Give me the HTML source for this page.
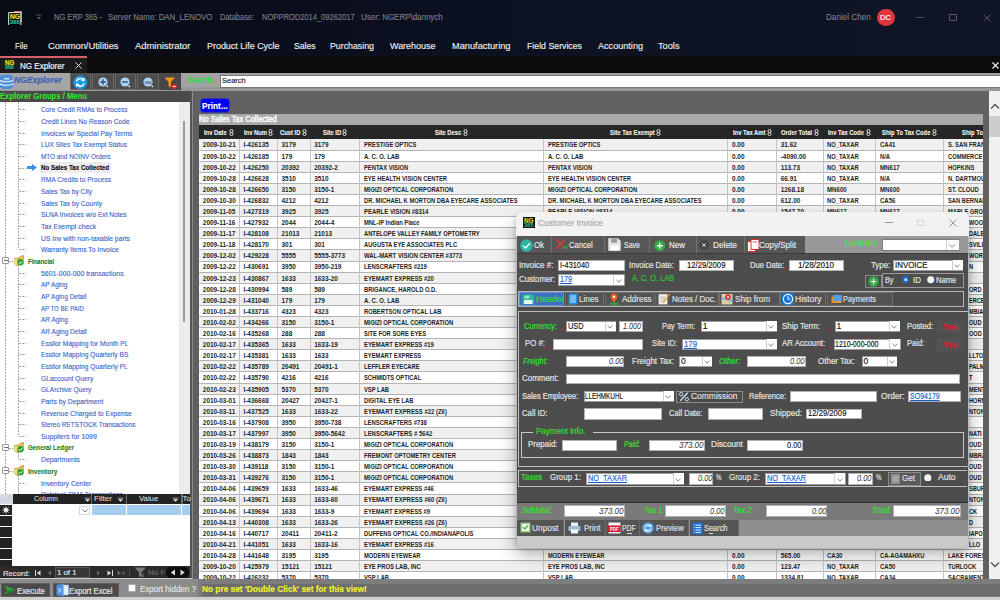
<!DOCTYPE html>
<html><head><meta charset="utf-8">
<style>
*{box-sizing:border-box;margin:0;padding:0}
html,body{width:1000px;height:600px;overflow:hidden;background:#0d1120;font-family:"Liberation Sans",sans-serif}
.a{position:absolute}
.t{position:absolute;white-space:nowrap;line-height:1}
</style></head><body>
<div class="a" style="left:0px;top:0px;width:1000px;height:56px;background:linear-gradient(90deg,#070b14 0%,#0b1020 40%,#0e1424 70%,#0f1525 100%)"></div>
<svg class="a" style="left:7px;top:10px;" width="16" height="17" viewBox="0 0 16 17"><rect x="13.5" y="1" width="1.5" height="11" fill="#d8707a"/><rect x="7" y="1" width="7.5" height="1.5" fill="#d8707a"/><rect x="2" y="3" width="12" height="12" fill="#050505"/><path d="M1.7 15V2.6H13.8V15" stroke="#f0f0f0" stroke-width="1" fill="none"/></svg>
<div class="t" style="left:9.60px;top:13.21px;font-size:7.2px;color:#f0e020;font-weight:bold;transform:scaleX(0.9259);transform-origin:0 0;;-webkit-text-stroke:0.15px #f0e020;">NG</div>
<div class="t" style="left:9.80px;top:19.80px;font-size:5.2px;color:#2fc09a;font-weight:bold;transform:scaleX(1.1295);transform-origin:0 0;;-webkit-text-stroke:0.15px #2fc09a;">365</div>
<svg class="a" style="left:35.5px;top:13.5px;" width="6" height="6" viewBox="0 0 6 6"><path d="M0.5 1H5.5" stroke="#5a5f6a" stroke-width="1"/><path d="M0.8 3H5.2L3 5.3Z" fill="#5a5f6a"/></svg>
<div class="t" style="left:53.50px;top:13.14px;font-size:8.7px;color:#7e8086;transform:scaleX(0.8657);transform-origin:0 0;-webkit-text-stroke:0.12px #7e8086">NG ERP 365 -</div>
<div class="t" style="left:108.00px;top:13.14px;font-size:8.7px;color:#7e8086;transform:scaleX(0.9043);transform-origin:0 0;-webkit-text-stroke:0.12px #7e8086">Server Name: DAN_LENOVO</div>
<div class="t" style="left:219.50px;top:13.14px;font-size:8.7px;color:#7e8086;transform:scaleX(0.8623);transform-origin:0 0;-webkit-text-stroke:0.12px #7e8086">Database:</div>
<div class="t" style="left:261.75px;top:13.14px;font-size:8.7px;color:#7e8086;transform:scaleX(0.8682);transform-origin:0 0;-webkit-text-stroke:0.12px #7e8086">NOPPROD2014_09262017</div>
<div class="t" style="left:361.25px;top:13.14px;font-size:8.7px;color:#7e8086;transform:scaleX(0.9144);transform-origin:0 0;-webkit-text-stroke:0.12px #7e8086">User: NGERP\dannych</div>
<div class="t" style="left:825.60px;top:13.14px;font-size:8.7px;color:#7e8086;transform:scaleX(0.9356);transform-origin:0 0;-webkit-text-stroke:0.12px #7e8086">Daniel Chen</div>
<div class="a" style="left:877px;top:8.5px;width:17.5px;height:17.5px;border-radius:50%;background:#e1343e"></div>
<div class="t" style="left:880.25px;top:13.65px;font-size:7.5px;color:#fff;transform:scaleX(1.0154);transform-origin:0 0;;-webkit-text-stroke:0.15px #fff;">DC</div>
<div class="a" style="left:916px;top:17px;width:8px;height:1px;background:#4a4f5a"></div>
<div class="a" style="left:949px;top:14px;width:8px;height:7px;border:1px solid #5a5f6a;border-radius:1px"></div>
<svg class="a" style="left:983px;top:13.5px;" width="8" height="8" viewBox="0 0 8 8"><path d="M0.5 0.5L7.5 7.5M7.5 0.5L0.5 7.5" stroke="#5a5f6a" stroke-width="0.9"/></svg>
<div class="t" style="left:15.00px;top:41.06px;font-size:9.5px;color:#ededed;transform:scaleX(0.8165);transform-origin:0 0;-webkit-text-stroke:0.15px #ededed">File</div>
<div class="t" style="left:47.50px;top:41.06px;font-size:9.5px;color:#ededed;transform:scaleX(0.9820);transform-origin:0 0;-webkit-text-stroke:0.15px #ededed">Common/Utilities</div>
<div class="t" style="left:134.50px;top:41.06px;font-size:9.5px;color:#ededed;transform:scaleX(0.9917);transform-origin:0 0;-webkit-text-stroke:0.15px #ededed">Administrator</div>
<div class="t" style="left:207.00px;top:41.06px;font-size:9.5px;color:#ededed;transform:scaleX(0.9404);transform-origin:0 0;-webkit-text-stroke:0.15px #ededed">Product Life Cycle</div>
<div class="t" style="left:294.00px;top:41.06px;font-size:9.5px;color:#ededed;transform:scaleX(0.9047);transform-origin:0 0;-webkit-text-stroke:0.15px #ededed">Sales</div>
<div class="t" style="left:330.00px;top:41.06px;font-size:9.5px;color:#ededed;transform:scaleX(0.9257);transform-origin:0 0;-webkit-text-stroke:0.15px #ededed">Purchasing</div>
<div class="t" style="left:389.50px;top:41.06px;font-size:9.5px;color:#ededed;transform:scaleX(0.9434);transform-origin:0 0;-webkit-text-stroke:0.15px #ededed">Warehouse</div>
<div class="t" style="left:451.50px;top:41.06px;font-size:9.5px;color:#ededed;transform:scaleX(0.9717);transform-origin:0 0;-webkit-text-stroke:0.15px #ededed">Manufacturing</div>
<div class="t" style="left:526.50px;top:41.06px;font-size:9.5px;color:#ededed;transform:scaleX(0.9219);transform-origin:0 0;-webkit-text-stroke:0.15px #ededed">Field Services</div>
<div class="t" style="left:597.50px;top:41.06px;font-size:9.5px;color:#ededed;transform:scaleX(0.9573);transform-origin:0 0;-webkit-text-stroke:0.15px #ededed">Accounting</div>
<div class="t" style="left:658.00px;top:41.06px;font-size:9.5px;color:#ededed;transform:scaleX(0.9694);transform-origin:0 0;-webkit-text-stroke:0.15px #ededed">Tools</div>
<div class="a" style="left:0px;top:56px;width:1000px;height:17px;background:#0b0b0b"></div>
<div class="a" style="left:0px;top:56px;width:87px;height:17.5px;background:#1b1b1b"></div>
<div class="a" style="left:0px;top:56px;width:87px;height:2px;background:#d65f6e"></div>
<div class="t" style="left:4.80px;top:59.34px;font-size:7.4px;color:#f2e31b;font-weight:bold;transform:scaleX(0.8378);transform-origin:0 0;;-webkit-text-stroke:0.15px #f2e31b;">NG</div>
<div class="t" style="left:5.20px;top:66.01px;font-size:4.6px;color:#2fb890;font-weight:bold;transform:scaleX(1.1466);transform-origin:0 0;;-webkit-text-stroke:0.15px #2fb890;">365</div>
<div class="t" style="left:20.40px;top:60.84px;font-size:9.4px;color:#f6f6f6;transform:scaleX(0.8624);transform-origin:0 0;-webkit-text-stroke:0.2px #f6f6f6">NG Explorer</div>
<svg class="a" style="left:74.5px;top:61.5px;" width="7" height="7" viewBox="0 0 7 7"><path d="M0.5 0.5L6.5 6.5M6.5 0.5L0.5 6.5" stroke="#e6e6e6" stroke-width="1"/></svg>
<svg class="a" style="left:991.5px;top:61.5px;" width="7" height="7" viewBox="0 0 7 7"><path d="M0.5 0.5L6.5 6.5M6.5 0.5L0.5 6.5" stroke="#f4f4f4" stroke-width="1.1"/></svg>
<div class="a" style="left:0px;top:73px;width:1000px;height:18px;background:#a2a2a2"></div>
<div class="a" style="left:0px;top:87px;width:1000px;height:4px;background:#999"></div>
<div class="a" style="left:0px;top:73px;width:69.5px;height:17px;background:#a5a5a5"></div>
<svg class="a" style="left:0;top:74px" width="14" height="15" viewBox="0 0 14 15"><ellipse cx="6.5" cy="3" rx="6.5" ry="2.5" fill="#4f90d8"/><rect x="0" y="3" width="13" height="10" fill="#4f90d8"/><ellipse cx="6.5" cy="13" rx="6.5" ry="2" fill="#4f90d8"/><path d="M0 6.5Q6.5 9 13 6.5M0 10Q6.5 12.5 13 10" stroke="#e8f2ff" stroke-width="1.2" fill="none"/><rect x="4" y="4" width="5" height="1.5" fill="#cfe3fa"/></svg>
<div class="t" style="left:14.00px;top:75.34px;font-size:9.4px;color:#3b5fb5;font-weight:bold;font-style:italic;transform:scaleX(0.9189);transform-origin:0 0;;-webkit-text-stroke:0.15px #3b5fb5;">NGExplorer</div>
<div class="a" style="left:69.5px;top:73px;width:111px;height:17px;background:#4a4a4a"></div>
<div class="a" style="left:69.5px;top:73.5px;width:21.799999999999997px;height:16.5px;border:1px solid #6a6a6a;border-top-color:#5a5a5a;background:#4c4c4c"></div>
<div class="a" style="left:91.9px;top:73.5px;width:21.89999999999999px;height:16.5px;border:1px solid #6a6a6a;border-top-color:#5a5a5a;background:#4c4c4c"></div>
<div class="a" style="left:114.7px;top:73.5px;width:21.60000000000001px;height:16.5px;border:1px solid #6a6a6a;border-top-color:#5a5a5a;background:#4c4c4c"></div>
<div class="a" style="left:136.9px;top:73.5px;width:21.900000000000006px;height:16.5px;border:1px solid #6a6a6a;border-top-color:#5a5a5a;background:#4c4c4c"></div>
<div class="a" style="left:158.8px;top:73.5px;width:22px;height:16.5px;background:#474747"></div>
<svg class="a" style="left:73px;top:74.5px;" width="15" height="15" viewBox="0 0 15 15"><circle cx="7.3" cy="7.4" r="7" fill="#1b9ae4"/><path d="M3.6 6.4A3.9 3.9 0 0 1 10.6 5.2" stroke="#fff" stroke-width="1.6" fill="none"/><path d="M11.8 2.8L11.4 6.6L7.8 5.6Z" fill="#fff"/><path d="M11 8.4A3.9 3.9 0 0 1 4 9.6" stroke="#fff" stroke-width="1.6" fill="none"/><path d="M2.8 12L3.2 8.2L6.8 9.2Z" fill="#fff"/></svg>
<svg class="a" style="left:96.5px;top:75.5px;" width="12" height="12" viewBox="0 0 12 12"><circle cx="6" cy="6" r="4.6" fill="#a9d3f5"/><path d="M6 3.2V8.8M3.2 6H8.8" stroke="#3a4a66" stroke-width="1.3"/><circle cx="10.3" cy="10.3" r="0.9" fill="#fff"/></svg>
<svg class="a" style="left:119px;top:75.5px;" width="12" height="12" viewBox="0 0 12 12"><circle cx="6" cy="6" r="4.6" fill="#a9d3f5"/><path d="M3.2 6H8.8" stroke="#3a4a66" stroke-width="1.4"/><circle cx="10.3" cy="10.3" r="0.9" fill="#fff"/></svg>
<svg class="a" style="left:141.5px;top:75.5px;" width="12" height="12" viewBox="0 0 12 12"><circle cx="6" cy="6" r="4.6" fill="#a9d3f5"/><text x="6" y="7.6" font-size="4.2" text-anchor="middle" fill="#3a4a66" font-family="Liberation Sans" font-weight="bold">100</text><circle cx="10.3" cy="10.3" r="0.9" fill="#fff"/></svg>
<svg class="a" style="left:164px;top:76.5px;" width="14" height="12" viewBox="0 0 14 12"><path d="M0.5 0.5H11L7 5V10.5L4.5 9V5Z" fill="#f7941d"/><circle cx="10.3" cy="9.5" r="2.6" fill="#e22b2b"/><rect x="8.8" y="9.1" width="3" height="0.9" fill="#fff"/></svg>
<div class="t" style="left:187.50px;top:76.10px;font-size:8.5px;color:#28e028;font-weight:bold;transform:scaleX(0.8338);transform-origin:0 0;">Search:</div>
<div class="a" style="left:220px;top:74.5px;width:780px;height:13.5px;background:#fff;border:1px solid #777;border-right:none"></div>
<div class="t" style="left:221.80px;top:77.03px;font-size:8px;color:#1a1a1a;transform:scaleX(0.9350);transform-origin:0 0;;-webkit-text-stroke:0.15px #1a1a1a;">Search</div>
<div class="a" style="left:0px;top:90.5px;width:190px;height:11.5px;background:#4a4a4a"></div>
<div class="t" style="left:0.30px;top:91.75px;font-size:8.8px;color:#30ea30;font-weight:bold;transform:scaleX(0.8722);transform-origin:0 0;">Explorer Groups / Menu</div>
<div class="a" style="left:0px;top:101.8px;width:190px;height:393px;background:#fff"></div>
<div class="a" style="left:178.5px;top:101.8px;width:11.5px;height:393px;background:#ececec"></div>
<div class="a" style="left:183px;top:120.5px;width:2px;height:201px;background:#9c9c9c"></div>
<div class="a" style="left:190px;top:90.5px;width:2.5px;height:490px;background:#555"></div>
<div class="a" style="left:5px;top:101.8px;width:1px;height:393px;background-image:linear-gradient(#a8a8a8 60%,transparent 60%);background-size:1px 3px;"></div>
<div class="a" style="left:18px;top:101.8px;width:1px;height:147.39999999999998px;background-image:linear-gradient(#a8a8a8 60%,transparent 60%);background-size:1px 3px;"></div>
<div class="a" style="left:18px;top:265.3666666666667px;width:1px;height:170.49999999999994px;background-image:linear-gradient(#a8a8a8 60%,transparent 60%);background-size:1px 3px;"></div>
<div class="a" style="left:18px;top:452.0333333333333px;width:1px;height:7.166666666666686px;background-image:linear-gradient(#a8a8a8 60%,transparent 60%);background-size:1px 3px;"></div>
<div class="a" style="left:18px;top:475.3666666666666px;width:1px;height:19.633333333333383px;background-image:linear-gradient(#a8a8a8 60%,transparent 60%);background-size:1px 3px;"></div>
<div class="a" style="left:19px;top:109.2px;width:7px;height:1px;background-image:linear-gradient(90deg,#a8a8a8 60%,transparent 60%);background-size:3px 1px;"></div>
<div class="t" style="left:41.00px;top:106.24px;font-size:7.4px;color:#3b63c9;transform:scaleX(0.8937);transform-origin:0 0;-webkit-text-stroke:0.12px #3b63c9">Core Credit RMAs to Process</div>
<div class="a" style="left:19px;top:120.86666666666667px;width:7px;height:1px;background-image:linear-gradient(90deg,#a8a8a8 60%,transparent 60%);background-size:3px 1px;"></div>
<div class="t" style="left:41.00px;top:117.90px;font-size:7.4px;color:#3b63c9;transform:scaleX(0.9037);transform-origin:0 0;-webkit-text-stroke:0.12px #3b63c9">Credit Lines No Reason Code</div>
<div class="a" style="left:19px;top:132.53333333333333px;width:7px;height:1px;background-image:linear-gradient(90deg,#a8a8a8 60%,transparent 60%);background-size:3px 1px;"></div>
<div class="t" style="left:41.00px;top:129.57px;font-size:7.4px;color:#3b63c9;transform:scaleX(0.9171);transform-origin:0 0;-webkit-text-stroke:0.12px #3b63c9">Invoices w/ Special Pay Terms</div>
<div class="a" style="left:19px;top:144.2px;width:7px;height:1px;background-image:linear-gradient(90deg,#a8a8a8 60%,transparent 60%);background-size:3px 1px;"></div>
<div class="t" style="left:41.00px;top:141.24px;font-size:7.4px;color:#3b63c9;transform:scaleX(0.8916);transform-origin:0 0;-webkit-text-stroke:0.12px #3b63c9">LUX Sites Tax Exempt Status</div>
<div class="a" style="left:19px;top:155.86666666666667px;width:7px;height:1px;background-image:linear-gradient(90deg,#a8a8a8 60%,transparent 60%);background-size:3px 1px;"></div>
<div class="t" style="left:41.00px;top:152.90px;font-size:7.4px;color:#3b63c9;transform:scaleX(0.8611);transform-origin:0 0;-webkit-text-stroke:0.12px #3b63c9">MTO and NOINV Orders</div>
<div class="a" style="left:19px;top:167.53333333333333px;width:7px;height:1px;background-image:linear-gradient(90deg,#a8a8a8 60%,transparent 60%);background-size:3px 1px;"></div>
<div class="a" style="left:39.5px;top:162.03333333333333px;width:71.3px;height:11.2px;background:#ececec"></div>
<svg class="a" style="left:26.5px;top:164.03333333333333px;" width="10" height="7" viewBox="0 0 10 7"><path d="M0 2H5V0L10 3.5L5 7V5H0Z" fill="#3d8fe0"/></svg>
<div class="t" style="left:41.00px;top:164.78px;font-size:6.8px;color:#111;font-weight:bold;transform:scaleX(0.9149);transform-origin:0 0;;-webkit-text-stroke:0.15px #111;">No Sales Tax Collected</div>
<div class="a" style="left:19px;top:179.2px;width:7px;height:1px;background-image:linear-gradient(90deg,#a8a8a8 60%,transparent 60%);background-size:3px 1px;"></div>
<div class="t" style="left:41.00px;top:176.24px;font-size:7.4px;color:#3b63c9;transform:scaleX(0.8926);transform-origin:0 0;-webkit-text-stroke:0.12px #3b63c9">RMA Credits to Process</div>
<div class="a" style="left:19px;top:190.86666666666667px;width:7px;height:1px;background-image:linear-gradient(90deg,#a8a8a8 60%,transparent 60%);background-size:3px 1px;"></div>
<div class="t" style="left:41.00px;top:187.90px;font-size:7.4px;color:#3b63c9;transform:scaleX(0.9040);transform-origin:0 0;-webkit-text-stroke:0.12px #3b63c9">Sales Tax by City</div>
<div class="a" style="left:19px;top:202.53333333333333px;width:7px;height:1px;background-image:linear-gradient(90deg,#a8a8a8 60%,transparent 60%);background-size:3px 1px;"></div>
<div class="t" style="left:41.00px;top:199.57px;font-size:7.4px;color:#3b63c9;transform:scaleX(0.9097);transform-origin:0 0;-webkit-text-stroke:0.12px #3b63c9">Sales Tax by County</div>
<div class="a" style="left:19px;top:214.2px;width:7px;height:1px;background-image:linear-gradient(90deg,#a8a8a8 60%,transparent 60%);background-size:3px 1px;"></div>
<div class="t" style="left:41.00px;top:211.24px;font-size:7.4px;color:#3b63c9;transform:scaleX(0.8939);transform-origin:0 0;-webkit-text-stroke:0.12px #3b63c9">SLNA Invoices w/o Ext Notes</div>
<div class="a" style="left:19px;top:225.86666666666667px;width:7px;height:1px;background-image:linear-gradient(90deg,#a8a8a8 60%,transparent 60%);background-size:3px 1px;"></div>
<div class="t" style="left:41.00px;top:222.90px;font-size:7.4px;color:#3b63c9;transform:scaleX(0.9182);transform-origin:0 0;-webkit-text-stroke:0.12px #3b63c9">Tax Exempt check</div>
<div class="a" style="left:19px;top:237.5333333333333px;width:7px;height:1px;background-image:linear-gradient(90deg,#a8a8a8 60%,transparent 60%);background-size:3px 1px;"></div>
<div class="t" style="left:41.00px;top:234.57px;font-size:7.4px;color:#3b63c9;transform:scaleX(0.9221);transform-origin:0 0;-webkit-text-stroke:0.12px #3b63c9">US Inv with non-taxable parts</div>
<div class="a" style="left:19px;top:249.2px;width:7px;height:1px;background-image:linear-gradient(90deg,#a8a8a8 60%,transparent 60%);background-size:3px 1px;"></div>
<div class="t" style="left:41.00px;top:246.24px;font-size:7.4px;color:#3b63c9;transform:scaleX(0.9147);transform-origin:0 0;-webkit-text-stroke:0.12px #3b63c9">Warranty Items To Invoice</div>
<div class="a" style="left:2px;top:257.3666666666667px;width:7px;height:7px;background:#fff;border:1px solid #9a9a9a;border-radius:1px"></div>
<div class="a" style="left:3.5px;top:260.3666666666667px;width:4px;height:1px;background:#6a6a6a"></div>
<div class="a" style="left:9px;top:260.8666666666667px;width:4px;height:1px;background-image:linear-gradient(90deg,#a8a8a8 60%,transparent 60%);background-size:3px 1px;"></div>
<svg class="a" style="left:12.5px;top:254.86666666666667px;" width="12" height="11" viewBox="0 0 12 11"><path d="M1.5 3.5L6 3L7.5 1.2L10.5 0.5L10 8L4 10.5L1 8Z" fill="#e8c25a" stroke="#b58a22" stroke-width="0.7"/><path d="M0.8 4.5L4 4L5 9.5L1.5 9Z" fill="#f5dc8a"/><circle cx="7.5" cy="7.3" r="3.2" fill="#2aa52a"/><path d="M5.8 7.3L7.1 8.6L9.3 6.1" stroke="#fff" stroke-width="1" fill="none"/></svg>
<div class="t" style="left:27.50px;top:257.77px;font-size:7.2px;color:#1d7a1d;font-weight:bold;transform:scaleX(0.8395);transform-origin:0 0;-webkit-text-stroke:0.1px #1d7a1d">Financial</div>
<div class="a" style="left:19px;top:272.5333333333333px;width:7px;height:1px;background-image:linear-gradient(90deg,#a8a8a8 60%,transparent 60%);background-size:3px 1px;"></div>
<div class="t" style="left:41.00px;top:269.57px;font-size:7.4px;color:#3b63c9;transform:scaleX(0.9400);transform-origin:0 0;-webkit-text-stroke:0.12px #3b63c9">5601-000-000 transactions</div>
<div class="a" style="left:19px;top:284.2px;width:7px;height:1px;background-image:linear-gradient(90deg,#a8a8a8 60%,transparent 60%);background-size:3px 1px;"></div>
<div class="t" style="left:41.00px;top:281.24px;font-size:7.4px;color:#3b63c9;transform:scaleX(0.8728);transform-origin:0 0;-webkit-text-stroke:0.12px #3b63c9">AP Aging</div>
<div class="a" style="left:19px;top:295.8666666666667px;width:7px;height:1px;background-image:linear-gradient(90deg,#a8a8a8 60%,transparent 60%);background-size:3px 1px;"></div>
<div class="t" style="left:41.00px;top:292.90px;font-size:7.4px;color:#3b63c9;transform:scaleX(0.8856);transform-origin:0 0;-webkit-text-stroke:0.12px #3b63c9">AP Aging Detail</div>
<div class="a" style="left:19px;top:307.5333333333333px;width:7px;height:1px;background-image:linear-gradient(90deg,#a8a8a8 60%,transparent 60%);background-size:3px 1px;"></div>
<div class="t" style="left:41.00px;top:304.57px;font-size:7.4px;color:#3b63c9;transform:scaleX(0.8162);transform-origin:0 0;-webkit-text-stroke:0.12px #3b63c9">AP TO BE PAID</div>
<div class="a" style="left:19px;top:319.2px;width:7px;height:1px;background-image:linear-gradient(90deg,#a8a8a8 60%,transparent 60%);background-size:3px 1px;"></div>
<div class="t" style="left:41.00px;top:316.24px;font-size:7.4px;color:#3b63c9;transform:scaleX(0.8719);transform-origin:0 0;-webkit-text-stroke:0.12px #3b63c9">AR Aging</div>
<div class="a" style="left:19px;top:330.8666666666667px;width:7px;height:1px;background-image:linear-gradient(90deg,#a8a8a8 60%,transparent 60%);background-size:3px 1px;"></div>
<div class="t" style="left:41.00px;top:327.90px;font-size:7.4px;color:#3b63c9;transform:scaleX(0.8849);transform-origin:0 0;-webkit-text-stroke:0.12px #3b63c9">AR Aging Detail</div>
<div class="a" style="left:19px;top:342.5333333333333px;width:7px;height:1px;background-image:linear-gradient(90deg,#a8a8a8 60%,transparent 60%);background-size:3px 1px;"></div>
<div class="t" style="left:41.00px;top:339.57px;font-size:7.4px;color:#3b63c9;transform:scaleX(0.9020);transform-origin:0 0;-webkit-text-stroke:0.12px #3b63c9">Essilor Mapping for Month PL</div>
<div class="a" style="left:19px;top:354.2px;width:7px;height:1px;background-image:linear-gradient(90deg,#a8a8a8 60%,transparent 60%);background-size:3px 1px;"></div>
<div class="t" style="left:41.00px;top:351.24px;font-size:7.4px;color:#3b63c9;transform:scaleX(0.9014);transform-origin:0 0;-webkit-text-stroke:0.12px #3b63c9">Essilor Mapping Quarterly BS</div>
<div class="a" style="left:19px;top:365.8666666666666px;width:7px;height:1px;background-image:linear-gradient(90deg,#a8a8a8 60%,transparent 60%);background-size:3px 1px;"></div>
<div class="t" style="left:41.00px;top:362.90px;font-size:7.4px;color:#3b63c9;transform:scaleX(0.9023);transform-origin:0 0;-webkit-text-stroke:0.12px #3b63c9">Essilor Mapping Quarterly PL</div>
<div class="a" style="left:19px;top:377.5333333333333px;width:7px;height:1px;background-image:linear-gradient(90deg,#a8a8a8 60%,transparent 60%);background-size:3px 1px;"></div>
<div class="t" style="left:41.00px;top:374.57px;font-size:7.4px;color:#3b63c9;transform:scaleX(0.9023);transform-origin:0 0;-webkit-text-stroke:0.12px #3b63c9">GLaccount Query</div>
<div class="a" style="left:19px;top:389.2px;width:7px;height:1px;background-image:linear-gradient(90deg,#a8a8a8 60%,transparent 60%);background-size:3px 1px;"></div>
<div class="t" style="left:41.00px;top:386.24px;font-size:7.4px;color:#3b63c9;transform:scaleX(0.8893);transform-origin:0 0;-webkit-text-stroke:0.12px #3b63c9">GLArchive Query</div>
<div class="a" style="left:19px;top:400.8666666666666px;width:7px;height:1px;background-image:linear-gradient(90deg,#a8a8a8 60%,transparent 60%);background-size:3px 1px;"></div>
<div class="t" style="left:41.00px;top:397.90px;font-size:7.4px;color:#3b63c9;transform:scaleX(0.9188);transform-origin:0 0;-webkit-text-stroke:0.12px #3b63c9">Parts by Department</div>
<div class="a" style="left:19px;top:412.5333333333333px;width:7px;height:1px;background-image:linear-gradient(90deg,#a8a8a8 60%,transparent 60%);background-size:3px 1px;"></div>
<div class="t" style="left:41.00px;top:409.57px;font-size:7.4px;color:#3b63c9;transform:scaleX(0.9179);transform-origin:0 0;-webkit-text-stroke:0.12px #3b63c9">Revenue Charged to Expense</div>
<div class="a" style="left:19px;top:424.2px;width:7px;height:1px;background-image:linear-gradient(90deg,#a8a8a8 60%,transparent 60%);background-size:3px 1px;"></div>
<div class="t" style="left:41.00px;top:421.24px;font-size:7.4px;color:#3b63c9;transform:scaleX(0.8758);transform-origin:0 0;-webkit-text-stroke:0.12px #3b63c9">Stereo RETSTOCK Transactions</div>
<div class="a" style="left:19px;top:435.8666666666666px;width:7px;height:1px;background-image:linear-gradient(90deg,#a8a8a8 60%,transparent 60%);background-size:3px 1px;"></div>
<div class="t" style="left:41.00px;top:432.90px;font-size:7.4px;color:#3b63c9;transform:scaleX(0.9285);transform-origin:0 0;-webkit-text-stroke:0.12px #3b63c9">Suppliers for 1099</div>
<div class="a" style="left:2px;top:444.0333333333333px;width:7px;height:7px;background:#fff;border:1px solid #9a9a9a;border-radius:1px"></div>
<div class="a" style="left:3.5px;top:447.0333333333333px;width:4px;height:1px;background:#6a6a6a"></div>
<div class="a" style="left:9px;top:447.5333333333333px;width:4px;height:1px;background-image:linear-gradient(90deg,#a8a8a8 60%,transparent 60%);background-size:3px 1px;"></div>
<svg class="a" style="left:12.5px;top:441.5333333333333px;" width="12" height="11" viewBox="0 0 12 11"><path d="M1.5 3.5L6 3L7.5 1.2L10.5 0.5L10 8L4 10.5L1 8Z" fill="#e8c25a" stroke="#b58a22" stroke-width="0.7"/><path d="M0.8 4.5L4 4L5 9.5L1.5 9Z" fill="#f5dc8a"/><circle cx="7.5" cy="7.3" r="3.2" fill="#2aa52a"/><path d="M5.8 7.3L7.1 8.6L9.3 6.1" stroke="#fff" stroke-width="1" fill="none"/></svg>
<div class="t" style="left:27.50px;top:444.44px;font-size:7.2px;color:#1d7a1d;font-weight:bold;transform:scaleX(0.8709);transform-origin:0 0;-webkit-text-stroke:0.1px #1d7a1d">General Ledger</div>
<div class="a" style="left:19px;top:459.2px;width:7px;height:1px;background-image:linear-gradient(90deg,#a8a8a8 60%,transparent 60%);background-size:3px 1px;"></div>
<div class="t" style="left:41.00px;top:456.24px;font-size:7.4px;color:#3b63c9;transform:scaleX(0.9223);transform-origin:0 0;-webkit-text-stroke:0.12px #3b63c9">Departments</div>
<div class="a" style="left:2px;top:467.3666666666666px;width:7px;height:7px;background:#fff;border:1px solid #9a9a9a;border-radius:1px"></div>
<div class="a" style="left:3.5px;top:470.3666666666666px;width:4px;height:1px;background:#6a6a6a"></div>
<div class="a" style="left:9px;top:470.8666666666666px;width:4px;height:1px;background-image:linear-gradient(90deg,#a8a8a8 60%,transparent 60%);background-size:3px 1px;"></div>
<svg class="a" style="left:12.5px;top:464.8666666666666px;" width="12" height="11" viewBox="0 0 12 11"><path d="M1.5 3.5L6 3L7.5 1.2L10.5 0.5L10 8L4 10.5L1 8Z" fill="#e8c25a" stroke="#b58a22" stroke-width="0.7"/><path d="M0.8 4.5L4 4L5 9.5L1.5 9Z" fill="#f5dc8a"/><circle cx="7.5" cy="7.3" r="3.2" fill="#2aa52a"/><path d="M5.8 7.3L7.1 8.6L9.3 6.1" stroke="#fff" stroke-width="1" fill="none"/></svg>
<div class="t" style="left:27.50px;top:467.77px;font-size:7.2px;color:#1d7a1d;font-weight:bold;transform:scaleX(0.9103);transform-origin:0 0;-webkit-text-stroke:0.1px #1d7a1d">Inventory</div>
<div class="a" style="left:19px;top:482.5333333333333px;width:7px;height:1px;background-image:linear-gradient(90deg,#a8a8a8 60%,transparent 60%);background-size:3px 1px;"></div>
<div class="t" style="left:41.00px;top:479.57px;font-size:7.4px;color:#3b63c9;transform:scaleX(0.9211);transform-origin:0 0;-webkit-text-stroke:0.12px #3b63c9">Inventory Center</div>
<div class="a" style="left:19px;top:494.2px;width:7px;height:1px;background-image:linear-gradient(90deg,#a8a8a8 60%,transparent 60%);background-size:3px 1px;"></div>
<div class="t" style="left:41.00px;top:491.24px;font-size:7.4px;color:#3b63c9;transform:scaleX(0.8998);transform-origin:0 0;-webkit-text-stroke:0.12px #3b63c9">Retstock RMA Transactions</div>
<div class="a" style="left:0px;top:494px;width:190px;height:72px;background:#fff"></div>
<div class="a" style="left:0px;top:494px;width:12.5px;height:10px;background:#d5dae0"></div>
<svg class="a" style="left:1px;top:495px;" width="11" height="8" viewBox="0 0 11 8"><path d="M1 7.5L10 0.5" stroke="#b9c4d0" stroke-width="1"/></svg>
<div class="a" style="left:12.5px;top:494px;width:177.5px;height:10px;background:#232323"></div>
<div class="a" style="left:90.8px;top:494px;width:1.2px;height:10px;background:#6a6a6a"></div>
<div class="a" style="left:125.6px;top:494px;width:1.2px;height:10px;background:#6a6a6a"></div>
<div class="a" style="left:181.4px;top:494px;width:1.2px;height:10px;background:#6a6a6a"></div>
<div class="t" style="left:34.00px;top:495.20px;font-size:7.8px;color:#e8e8e8;transform:scaleX(0.8929);transform-origin:0 0;">Column</div>
<div class="t" style="left:94.40px;top:495.20px;font-size:7.8px;color:#e8e8e8;transform:scaleX(1.0384);transform-origin:0 0;">Filter</div>
<div class="t" style="left:138.80px;top:495.20px;font-size:7.8px;color:#e8e8e8;transform:scaleX(0.9912);transform-origin:0 0;">Value</div>
<div class="t" style="left:182.60px;top:495.20px;font-size:7.8px;color:#e8e8e8;">To</div>
<svg class="a" style="left:83.5px;top:497px;" width="7" height="5" viewBox="0 0 7 5"><path d="M0.5 1H6.5M1.5 2.5H5.5L3.5 4.5Z" fill="#ddd" stroke="#ddd" stroke-width="0.6"/></svg>
<svg class="a" style="left:116.6px;top:497px;" width="7" height="5" viewBox="0 0 7 5"><path d="M0.5 1H6.5M1.5 2.5H5.5L3.5 4.5Z" fill="#ddd" stroke="#ddd" stroke-width="0.6"/></svg>
<svg class="a" style="left:172.4px;top:497px;" width="7" height="5" viewBox="0 0 7 5"><path d="M0.5 1H6.5M1.5 2.5H5.5L3.5 4.5Z" fill="#ddd" stroke="#ddd" stroke-width="0.6"/></svg>
<div class="a" style="left:0px;top:504.5px;width:12px;height:10px;background:#232323"></div>
<div class="a" style="left:0px;top:515.5px;width:12px;height:10px;background:#232323"></div>
<div class="a" style="left:0px;top:526.5px;width:12px;height:10px;background:#232323"></div>
<div class="a" style="left:0px;top:537.5px;width:12px;height:10px;background:#232323"></div>
<div class="a" style="left:0px;top:548.5px;width:12px;height:10px;background:#232323"></div>
<div class="a" style="left:0px;top:559.5px;width:12px;height:10px;background:#232323"></div>
<svg class="a" style="left:2px;top:505.5px;" width="8" height="8" viewBox="0 0 8 8"><path d="M4 0.5V7.5M0.5 4H7.5M1.5 1.5L6.5 6.5M6.5 1.5L1.5 6.5" stroke="#fff" stroke-width="0.9"/><circle cx="4" cy="4" r="1.8" fill="#fff"/></svg>
<div class="a" style="left:12px;top:504.8px;width:78.8px;height:10.2px;background:#fff"></div>
<div class="a" style="left:79px;top:506px;width:11px;height:9px;background:#fff;border:1px solid #d8d8d8"></div>
<svg class="a" style="left:81.5px;top:508.5px;" width="6" height="4" viewBox="0 0 6 4"><path d="M0.5 0.5L3 3L5.5 0.5" stroke="#555" stroke-width="0.8" fill="none"/></svg>
<div class="a" style="left:92px;top:504.8px;width:33.6px;height:10.2px;background:#a6cef0"></div>
<div class="a" style="left:126.5px;top:504.8px;width:54.9px;height:10.2px;background:#a6cef0"></div>
<div class="a" style="left:182.3px;top:504.8px;width:7.7px;height:10.2px;background:#a6cef0"></div>
<div class="a" style="left:0px;top:566px;width:190px;height:11.7px;background:#2b2b2b"></div>
<div class="t" style="left:3.00px;top:569.57px;font-size:7.6px;color:#e2e2e2;transform:scaleX(1.0146);transform-origin:0 0;;-webkit-text-stroke:0.15px #e2e2e2;">Record:</div>
<svg class="a" style="left:35px;top:570px;" width="6" height="6" viewBox="0 0 6 6"><path d="M0.5 0V6" stroke="#ddd" stroke-width="1"/><path d="M5.5 0.5L1.8 3L5.5 5.5Z" fill="#ddd"/></svg>
<svg class="a" style="left:47px;top:570px;" width="5" height="6" viewBox="0 0 5 6"><path d="M4 0.5L0.8 3L4 5.5Z" fill="#666"/></svg>
<div class="a" style="left:55px;top:567px;width:34.5px;height:11px;background:#363636;border:1px solid #5a5a5a"></div>
<div class="t" style="left:56.50px;top:569.23px;font-size:8px;color:#e8e8e8;transform:scaleX(0.9742);transform-origin:0 0;;-webkit-text-stroke:0.15px #e8e8e8;">1 of 1</div>
<svg class="a" style="left:95.5px;top:570px;" width="5" height="6" viewBox="0 0 5 6"><path d="M1 0.5L4.2 3L1 5.5Z" fill="#666"/></svg>
<svg class="a" style="left:106.5px;top:570px;" width="6" height="6" viewBox="0 0 6 6"><path d="M0.5 0.5L4.2 3L0.5 5.5Z" fill="#ddd"/><path d="M5.5 0V6" stroke="#ddd" stroke-width="1"/></svg>
<svg class="a" style="left:117px;top:570px;" width="9" height="6" viewBox="0 0 9 6"><path d="M0.5 0.5L4 3L0.5 5.5Z" fill="#666"/><path d="M6.5 1V5M4.5 3H8.5" stroke="#666" stroke-width="0.8"/></svg>
<div class="a" style="left:129px;top:568px;width:1px;height:9px;background:#444"></div>
<svg class="a" style="left:134px;top:567px;" width="13" height="11" viewBox="0 0 13 11"><path d="M0.5 0.5H12L7.5 5.5V10.5L5 9V5.5Z" fill="#777"/><path d="M7 7L10 10M10 7L7 10" stroke="#888" stroke-width="0.8"/></svg>
<div class="t" style="left:148.00px;top:569.23px;font-size:8px;color:#6d6d6d;;-webkit-text-stroke:0.15px #6d6d6d;">No F</div>
<div class="a" style="left:166px;top:567px;width:23px;height:11px;background:#0e0e0e;border-radius:5px"></div>
<svg class="a" style="left:170px;top:569px;" width="16" height="7" viewBox="0 0 16 7"><path d="M5 0.5L0.8 3.5L5 6.5Z" fill="#ddd"/><path d="M10.5 0.5L14.7 3.5L10.5 6.5Z" fill="#ddd"/></svg>
<div class="a" style="left:0px;top:578.5px;width:198px;height:21.5px;background:#8b8b8b"></div>
<div class="a" style="left:0px;top:577.7px;width:198px;height:1.3px;background:#cdcdcd"></div>
<div class="a" style="left:1px;top:582.7px;width:49px;height:14.2px;background:#4a4a4a;border:1px solid #5e5e5e"></div>
<svg class="a" style="left:4px;top:584.5px;" width="12" height="10" viewBox="0 0 12 10"><path d="M0.5 0.5L11.5 5L0.5 9.5L3 5Z" fill="#2fa83a"/><path d="M3 5L11.5 5L0.5 9.5Z" fill="#1f8a2a"/></svg>
<div class="t" style="left:16.50px;top:587.29px;font-size:8.4px;color:#ececec;transform:scaleX(0.9225);transform-origin:0 0;;-webkit-text-stroke:0.15px #ececec;">Execute</div>
<div class="a" style="left:53px;top:582.7px;width:65.6px;height:14.2px;background:#4a4a4a;border:1px solid #5e5e5e"></div>
<svg class="a" style="left:56px;top:583px;" width="13" height="14" viewBox="0 0 13 14"><path d="M0.5 2L8 0.5V13.5L0.5 12Z" fill="#4f93e0"/><rect x="7.5" y="2" width="5" height="10" fill="#e4f0fc" stroke="#8fbdf0" stroke-width="0.6"/><path d="M2.2 5L5.5 9.5M5.5 5L2.2 9.5" stroke="#cfe4fb" stroke-width="0.8"/></svg>
<div class="t" style="left:69.00px;top:587.29px;font-size:8.4px;color:#ececec;transform:scaleX(0.9225);transform-origin:0 0;;-webkit-text-stroke:0.15px #ececec;">Export Excel</div>
<div class="a" style="left:128px;top:584px;width:7.5px;height:8px;background:#fafafa;border:1px solid #aaa;border-radius:1px"></div>
<div class="t" style="left:140.00px;top:585.39px;font-size:8.4px;color:#e6e6e6;transform:scaleX(0.9517);transform-origin:0 0;;-webkit-text-stroke:0.15px #e6e6e6;">Export hidden ?</div>
<div class="a" style="left:0px;top:597px;width:1000px;height:3px;background:#cfcfcf"></div>
<div class="a" style="left:192.5px;top:90.5px;width:807.5px;height:488.5px;background:#616161"></div>
<div class="a" style="left:192px;top:90.5px;width:1.2px;height:488.5px;background:#8a8a8a"></div>
<div class="a" style="left:193.2px;top:90.5px;width:5.6px;height:488.5px;background:#5f5f5f"></div>
<div class="a" style="left:199.8px;top:97.6px;width:30px;height:15.6px;background:#0000f5;border:1px solid #3838b0;border-radius:4px"></div>
<div class="t" style="left:201.60px;top:100.67px;font-size:9.6px;color:#fff;font-weight:bold;transform:scaleX(0.8638);transform-origin:0 0;;-webkit-text-stroke:0.15px #fff;">Print...</div>
<div class="a" style="left:198.8px;top:114.2px;width:784.5px;height:11px;background:#a9a9a9"></div>
<div class="t" style="left:199.20px;top:115.00px;font-size:8.5px;color:#ffffff;transform:scaleX(0.8846);transform-origin:0 0;;-webkit-text-stroke:0.4px #ffffff;">No Sales Tax Collected</div>
<div class="a" style="left:983.3px;top:90.5px;width:5.5px;height:488.5px;background:#616161"></div>
<div class="a" style="left:988.8px;top:90.5px;width:11.2px;height:488.5px;background:#f0f0f0"></div>
<div class="a" style="left:988.8px;top:115.8px;width:11.2px;height:21.5px;background:#cdcdcd"></div>
<svg class="a" style="left:990px;top:103px;" width="10" height="7" viewBox="0 0 10 7"><path d="M1 5.5L5 1.5L9 5.5" stroke="#555" stroke-width="1.4" fill="none"/></svg>
<svg class="a" style="left:990px;top:561px;" width="10" height="7" viewBox="0 0 10 7"><path d="M1 1.5L5 5.5L9 1.5" stroke="#555" stroke-width="1.4" fill="none"/></svg>
<div class="a" style="left:198px;top:579px;width:802px;height:18px;background:#7d7d7d"></div>
<div class="a" style="left:201.5px;top:583.8px;width:798.5px;height:12.4px;background:#6c6c6c"></div>
<div class="t" style="left:202.00px;top:585.32px;font-size:8.6px;color:#f2f22a;font-weight:bold;transform:scaleX(0.9656);transform-origin:0 0;;-webkit-text-stroke:0.15px #f2f22a;">No pre set &#x27;Double Click&#x27; set for this view!</div>
<div class="a" style="left:198.8px;top:125.2px;width:784.5px;height:453.8px;overflow:hidden;background:#fff">
<div class="a" style="left:0.0px;top:0.0px;width:900px;height:13.8px;background:#262626"></div>
<div class="a" style="left:0.0px;top:13.8px;width:900px;height:11.394444444444444px;background:#f0f0f0"></div>
<div class="t" style="left:4.00px;top:17.24px;font-size:6.45px;color:#1e1e1e;font-weight:bold;transform:scaleX(1.0000);transform-origin:0 0;">2009-10-21</div>
<div class="t" style="left:44.60px;top:17.24px;font-size:6.45px;color:#1e1e1e;font-weight:bold;transform:scaleX(1.0000);transform-origin:0 0;">I-426135</div>
<div class="t" style="left:82.70px;top:17.24px;font-size:6.45px;color:#1e1e1e;font-weight:bold;transform:scaleX(1.0000);transform-origin:0 0;">3179</div>
<div class="t" style="left:115.40px;top:17.24px;font-size:6.45px;color:#1e1e1e;font-weight:bold;transform:scaleX(1.0000);transform-origin:0 0;">3179</div>
<div class="t" style="left:164.80px;top:17.24px;font-size:6.45px;color:#1e1e1e;font-weight:bold;transform:scaleX(0.8982);transform-origin:0 0;">PRESTIGE OPTICS</div>
<div class="t" style="left:349.00px;top:17.24px;font-size:6.45px;color:#1e1e1e;font-weight:bold;transform:scaleX(0.8982);transform-origin:0 0;">PRESTIGE OPTICS</div>
<div class="t" style="left:533.20px;top:17.24px;font-size:6.45px;color:#1e1e1e;font-weight:bold;transform:scaleX(1.0000);transform-origin:0 0;">0.00</div>
<div class="t" style="left:581.90px;top:17.24px;font-size:6.45px;color:#1e1e1e;font-weight:bold;transform:scaleX(1.0000);transform-origin:0 0;">31.62</div>
<div class="t" style="left:628.70px;top:17.24px;font-size:6.45px;color:#1e1e1e;font-weight:bold;transform:scaleX(0.9056);transform-origin:0 0;">NO_TAXAR</div>
<div class="t" style="left:680.80px;top:17.24px;font-size:6.45px;color:#1e1e1e;font-weight:bold;transform:scaleX(0.9407);transform-origin:0 0;">CA41</div>
<div class="t" style="left:749.20px;top:17.24px;font-size:6.45px;color:#1e1e1e;font-weight:bold;transform:scaleX(0.9042);transform-origin:0 0;">S. SAN FRANCISCO</div>
<div class="a" style="left:0.0px;top:24.89px;width:900px;height:11.394444444444444px;background:#ffffff"></div>
<div class="t" style="left:4.00px;top:28.33px;font-size:6.45px;color:#1e1e1e;font-weight:bold;transform:scaleX(1.0000);transform-origin:0 0;">2009-10-22</div>
<div class="t" style="left:44.60px;top:28.33px;font-size:6.45px;color:#1e1e1e;font-weight:bold;transform:scaleX(1.0000);transform-origin:0 0;">I-426185</div>
<div class="t" style="left:82.70px;top:28.33px;font-size:6.45px;color:#1e1e1e;font-weight:bold;transform:scaleX(1.0000);transform-origin:0 0;">179</div>
<div class="t" style="left:115.40px;top:28.33px;font-size:6.45px;color:#1e1e1e;font-weight:bold;transform:scaleX(1.0000);transform-origin:0 0;">179</div>
<div class="t" style="left:164.80px;top:28.33px;font-size:6.45px;color:#1e1e1e;font-weight:bold;transform:scaleX(0.9244);transform-origin:0 0;">A. C. O. LAB</div>
<div class="t" style="left:349.00px;top:28.33px;font-size:6.45px;color:#1e1e1e;font-weight:bold;transform:scaleX(0.9244);transform-origin:0 0;">A. C. O. LAB</div>
<div class="t" style="left:533.20px;top:28.33px;font-size:6.45px;color:#1e1e1e;font-weight:bold;transform:scaleX(1.0000);transform-origin:0 0;">0.00</div>
<div class="t" style="left:581.90px;top:28.33px;font-size:6.45px;color:#1e1e1e;font-weight:bold;transform:scaleX(1.0000);transform-origin:0 0;">-4090.00</div>
<div class="t" style="left:628.70px;top:28.33px;font-size:6.45px;color:#1e1e1e;font-weight:bold;transform:scaleX(0.9056);transform-origin:0 0;">NO_TAXAR</div>
<div class="t" style="left:680.80px;top:28.33px;font-size:6.45px;color:#1e1e1e;font-weight:bold;transform:scaleX(0.9119);transform-origin:0 0;">N/A</div>
<div class="t" style="left:749.20px;top:28.33px;font-size:6.45px;color:#1e1e1e;font-weight:bold;transform:scaleX(0.8950);transform-origin:0 0;">COMMERCE</div>
<div class="a" style="left:0.0px;top:35.99px;width:900px;height:11.394444444444444px;background:#f0f0f0"></div>
<div class="t" style="left:4.00px;top:39.43px;font-size:6.45px;color:#1e1e1e;font-weight:bold;transform:scaleX(1.0000);transform-origin:0 0;">2009-10-22</div>
<div class="t" style="left:44.60px;top:39.43px;font-size:6.45px;color:#1e1e1e;font-weight:bold;transform:scaleX(1.0000);transform-origin:0 0;">I-426250</div>
<div class="t" style="left:82.70px;top:39.43px;font-size:6.45px;color:#1e1e1e;font-weight:bold;transform:scaleX(1.0000);transform-origin:0 0;">20392</div>
<div class="t" style="left:115.40px;top:39.43px;font-size:6.45px;color:#1e1e1e;font-weight:bold;transform:scaleX(1.0000);transform-origin:0 0;">20392-2</div>
<div class="t" style="left:164.80px;top:39.43px;font-size:6.45px;color:#1e1e1e;font-weight:bold;transform:scaleX(0.8988);transform-origin:0 0;">PENTAX VISION</div>
<div class="t" style="left:349.00px;top:39.43px;font-size:6.45px;color:#1e1e1e;font-weight:bold;transform:scaleX(0.8988);transform-origin:0 0;">PENTAX VISION</div>
<div class="t" style="left:533.20px;top:39.43px;font-size:6.45px;color:#1e1e1e;font-weight:bold;transform:scaleX(1.0000);transform-origin:0 0;">0.00</div>
<div class="t" style="left:581.90px;top:39.43px;font-size:6.45px;color:#1e1e1e;font-weight:bold;transform:scaleX(1.0000);transform-origin:0 0;">113.73</div>
<div class="t" style="left:628.70px;top:39.43px;font-size:6.45px;color:#1e1e1e;font-weight:bold;transform:scaleX(0.9056);transform-origin:0 0;">NO_TAXAR</div>
<div class="t" style="left:680.80px;top:39.43px;font-size:6.45px;color:#1e1e1e;font-weight:bold;transform:scaleX(0.9493);transform-origin:0 0;">MN617</div>
<div class="t" style="left:749.20px;top:39.43px;font-size:6.45px;color:#1e1e1e;font-weight:bold;transform:scaleX(0.8950);transform-origin:0 0;">HOPKINS</div>
<div class="a" style="left:0.0px;top:47.08px;width:900px;height:11.394444444444444px;background:#ffffff"></div>
<div class="t" style="left:4.00px;top:50.52px;font-size:6.45px;color:#1e1e1e;font-weight:bold;transform:scaleX(1.0000);transform-origin:0 0;">2009-10-28</div>
<div class="t" style="left:44.60px;top:50.52px;font-size:6.45px;color:#1e1e1e;font-weight:bold;transform:scaleX(1.0000);transform-origin:0 0;">I-426628</div>
<div class="t" style="left:82.70px;top:50.52px;font-size:6.45px;color:#1e1e1e;font-weight:bold;transform:scaleX(1.0000);transform-origin:0 0;">3510</div>
<div class="t" style="left:115.40px;top:50.52px;font-size:6.45px;color:#1e1e1e;font-weight:bold;transform:scaleX(1.0000);transform-origin:0 0;">3510</div>
<div class="t" style="left:164.80px;top:50.52px;font-size:6.45px;color:#1e1e1e;font-weight:bold;transform:scaleX(0.9011);transform-origin:0 0;">EYE HEALTH VISION CENTER</div>
<div class="t" style="left:349.00px;top:50.52px;font-size:6.45px;color:#1e1e1e;font-weight:bold;transform:scaleX(0.9011);transform-origin:0 0;">EYE HEALTH VISION CENTER</div>
<div class="t" style="left:533.20px;top:50.52px;font-size:6.45px;color:#1e1e1e;font-weight:bold;transform:scaleX(1.0000);transform-origin:0 0;">0.00</div>
<div class="t" style="left:581.90px;top:50.52px;font-size:6.45px;color:#1e1e1e;font-weight:bold;transform:scaleX(1.0000);transform-origin:0 0;">66.91</div>
<div class="t" style="left:628.70px;top:50.52px;font-size:6.45px;color:#1e1e1e;font-weight:bold;transform:scaleX(0.9056);transform-origin:0 0;">NO_TAXAR</div>
<div class="t" style="left:680.80px;top:50.52px;font-size:6.45px;color:#1e1e1e;font-weight:bold;transform:scaleX(0.9119);transform-origin:0 0;">N/A</div>
<div class="t" style="left:749.20px;top:50.52px;font-size:6.45px;color:#1e1e1e;font-weight:bold;transform:scaleX(0.9026);transform-origin:0 0;">N. DARTMOUTH</div>
<div class="a" style="left:0.0px;top:58.18px;width:900px;height:11.394444444444444px;background:#f0f0f0"></div>
<div class="t" style="left:4.00px;top:61.62px;font-size:6.45px;color:#1e1e1e;font-weight:bold;transform:scaleX(1.0000);transform-origin:0 0;">2009-10-28</div>
<div class="t" style="left:44.60px;top:61.62px;font-size:6.45px;color:#1e1e1e;font-weight:bold;transform:scaleX(1.0000);transform-origin:0 0;">I-426650</div>
<div class="t" style="left:82.70px;top:61.62px;font-size:6.45px;color:#1e1e1e;font-weight:bold;transform:scaleX(1.0000);transform-origin:0 0;">3150</div>
<div class="t" style="left:115.40px;top:61.62px;font-size:6.45px;color:#1e1e1e;font-weight:bold;transform:scaleX(1.0000);transform-origin:0 0;">3150-1</div>
<div class="t" style="left:164.80px;top:61.62px;font-size:6.45px;color:#1e1e1e;font-weight:bold;transform:scaleX(0.8988);transform-origin:0 0;">MIGIZI OPTICAL CORPORATION</div>
<div class="t" style="left:349.00px;top:61.62px;font-size:6.45px;color:#1e1e1e;font-weight:bold;transform:scaleX(0.8988);transform-origin:0 0;">MIGIZI OPTICAL CORPORATION</div>
<div class="t" style="left:533.20px;top:61.62px;font-size:6.45px;color:#1e1e1e;font-weight:bold;transform:scaleX(1.0000);transform-origin:0 0;">0.00</div>
<div class="t" style="left:581.90px;top:61.62px;font-size:6.45px;color:#1e1e1e;font-weight:bold;transform:scaleX(1.0000);transform-origin:0 0;">1268.18</div>
<div class="t" style="left:628.70px;top:61.62px;font-size:6.45px;color:#1e1e1e;font-weight:bold;transform:scaleX(0.9493);transform-origin:0 0;">MN600</div>
<div class="t" style="left:680.80px;top:61.62px;font-size:6.45px;color:#1e1e1e;font-weight:bold;transform:scaleX(0.9493);transform-origin:0 0;">MN600</div>
<div class="t" style="left:749.20px;top:61.62px;font-size:6.45px;color:#1e1e1e;font-weight:bold;transform:scaleX(0.9058);transform-origin:0 0;">ST. CLOUD</div>
<div class="a" style="left:0.0px;top:69.27px;width:900px;height:11.394444444444444px;background:#ffffff"></div>
<div class="t" style="left:4.00px;top:72.71px;font-size:6.45px;color:#1e1e1e;font-weight:bold;transform:scaleX(1.0000);transform-origin:0 0;">2009-10-30</div>
<div class="t" style="left:44.60px;top:72.71px;font-size:6.45px;color:#1e1e1e;font-weight:bold;transform:scaleX(1.0000);transform-origin:0 0;">I-426832</div>
<div class="t" style="left:82.70px;top:72.71px;font-size:6.45px;color:#1e1e1e;font-weight:bold;transform:scaleX(1.0000);transform-origin:0 0;">4212</div>
<div class="t" style="left:115.40px;top:72.71px;font-size:6.45px;color:#1e1e1e;font-weight:bold;transform:scaleX(1.0000);transform-origin:0 0;">4212</div>
<div class="t" style="left:164.80px;top:72.71px;font-size:6.45px;color:#1e1e1e;font-weight:bold;transform:scaleX(0.9027);transform-origin:0 0;">DR. MICHAEL K MORTON DBA EYECARE ASSOCIATES</div>
<div class="t" style="left:349.00px;top:72.71px;font-size:6.45px;color:#1e1e1e;font-weight:bold;transform:scaleX(0.9027);transform-origin:0 0;">DR. MICHAEL K MORTON DBA EYECARE ASSOCIATES</div>
<div class="t" style="left:533.20px;top:72.71px;font-size:6.45px;color:#1e1e1e;font-weight:bold;transform:scaleX(1.0000);transform-origin:0 0;">0.00</div>
<div class="t" style="left:581.90px;top:72.71px;font-size:6.45px;color:#1e1e1e;font-weight:bold;transform:scaleX(1.0000);transform-origin:0 0;">612.00</div>
<div class="t" style="left:628.70px;top:72.71px;font-size:6.45px;color:#1e1e1e;font-weight:bold;transform:scaleX(0.9056);transform-origin:0 0;">NO_TAXAR</div>
<div class="t" style="left:680.80px;top:72.71px;font-size:6.45px;color:#1e1e1e;font-weight:bold;transform:scaleX(0.9407);transform-origin:0 0;">CA56</div>
<div class="t" style="left:749.20px;top:72.71px;font-size:6.45px;color:#1e1e1e;font-weight:bold;transform:scaleX(0.8982);transform-origin:0 0;">SAN BERNARDINO</div>
<div class="a" style="left:0.0px;top:80.37px;width:900px;height:11.394444444444444px;background:#f0f0f0"></div>
<div class="t" style="left:4.00px;top:83.81px;font-size:6.45px;color:#1e1e1e;font-weight:bold;transform:scaleX(1.0000);transform-origin:0 0;">2009-11-05</div>
<div class="t" style="left:44.60px;top:83.81px;font-size:6.45px;color:#1e1e1e;font-weight:bold;transform:scaleX(1.0000);transform-origin:0 0;">I-427319</div>
<div class="t" style="left:82.70px;top:83.81px;font-size:6.45px;color:#1e1e1e;font-weight:bold;transform:scaleX(1.0000);transform-origin:0 0;">3925</div>
<div class="t" style="left:115.40px;top:83.81px;font-size:6.45px;color:#1e1e1e;font-weight:bold;transform:scaleX(1.0000);transform-origin:0 0;">3925</div>
<div class="t" style="left:164.80px;top:83.81px;font-size:6.45px;color:#1e1e1e;font-weight:bold;transform:scaleX(0.9275);transform-origin:0 0;">PEARLE VISION #8314</div>
<div class="t" style="left:349.00px;top:83.81px;font-size:6.45px;color:#1e1e1e;font-weight:bold;transform:scaleX(0.9275);transform-origin:0 0;">PEARLE VISION #8314</div>
<div class="t" style="left:533.20px;top:83.81px;font-size:6.45px;color:#1e1e1e;font-weight:bold;transform:scaleX(1.0000);transform-origin:0 0;">0.00</div>
<div class="t" style="left:581.90px;top:83.81px;font-size:6.45px;color:#1e1e1e;font-weight:bold;transform:scaleX(1.0000);transform-origin:0 0;">1547.70</div>
<div class="t" style="left:628.70px;top:83.81px;font-size:6.45px;color:#1e1e1e;font-weight:bold;transform:scaleX(0.9493);transform-origin:0 0;">MN617</div>
<div class="t" style="left:680.80px;top:83.81px;font-size:6.45px;color:#1e1e1e;font-weight:bold;transform:scaleX(0.9493);transform-origin:0 0;">MN617</div>
<div class="t" style="left:749.20px;top:83.81px;font-size:6.45px;color:#1e1e1e;font-weight:bold;transform:scaleX(0.8989);transform-origin:0 0;">MAPLE GROVE</div>
<div class="a" style="left:0.0px;top:91.46px;width:900px;height:11.394444444444444px;background:#ffffff"></div>
<div class="t" style="left:4.00px;top:94.90px;font-size:6.45px;color:#1e1e1e;font-weight:bold;transform:scaleX(1.0000);transform-origin:0 0;">2009-11-16</div>
<div class="t" style="left:44.60px;top:94.90px;font-size:6.45px;color:#1e1e1e;font-weight:bold;transform:scaleX(1.0000);transform-origin:0 0;">I-427932</div>
<div class="t" style="left:82.70px;top:94.90px;font-size:6.45px;color:#1e1e1e;font-weight:bold;transform:scaleX(1.0000);transform-origin:0 0;">2044</div>
<div class="t" style="left:115.40px;top:94.90px;font-size:6.45px;color:#1e1e1e;font-weight:bold;transform:scaleX(1.0000);transform-origin:0 0;">2044-4</div>
<div class="t" style="left:164.80px;top:94.90px;font-size:6.45px;color:#1e1e1e;font-weight:bold;transform:scaleX(0.9048);transform-origin:0 0;">MNL-IP Indian Place</div>
<div class="t" style="left:349.00px;top:94.90px;font-size:6.45px;color:#1e1e1e;font-weight:bold;transform:scaleX(0.9048);transform-origin:0 0;">MNL-IP Indian Place</div>
<div class="t" style="left:533.20px;top:94.90px;font-size:6.45px;color:#1e1e1e;font-weight:bold;transform:scaleX(1.0000);transform-origin:0 0;">0.00</div>
<div class="t" style="left:581.90px;top:94.90px;font-size:6.45px;color:#1e1e1e;font-weight:bold;transform:scaleX(1.0000);transform-origin:0 0;">100.00</div>
<div class="t" style="left:628.70px;top:94.90px;font-size:6.45px;color:#1e1e1e;font-weight:bold;transform:scaleX(0.9056);transform-origin:0 0;">NO_TAXAR</div>
<div class="t" style="left:680.80px;top:94.90px;font-size:6.45px;color:#1e1e1e;font-weight:bold;transform:scaleX(0.9119);transform-origin:0 0;">N/A</div>
<div class="t" style="left:769.80px;top:94.90px;font-size:6.45px;color:#141414;font-weight:bold;transform:scaleX(0.8700);transform-origin:0 0;">WOOD</div>
<div class="a" style="left:0.0px;top:102.56px;width:900px;height:11.394444444444444px;background:#f0f0f0"></div>
<div class="t" style="left:4.00px;top:106.00px;font-size:6.45px;color:#1e1e1e;font-weight:bold;transform:scaleX(1.0000);transform-origin:0 0;">2009-11-17</div>
<div class="t" style="left:44.60px;top:106.00px;font-size:6.45px;color:#1e1e1e;font-weight:bold;transform:scaleX(1.0000);transform-origin:0 0;">I-428108</div>
<div class="t" style="left:82.70px;top:106.00px;font-size:6.45px;color:#1e1e1e;font-weight:bold;transform:scaleX(1.0000);transform-origin:0 0;">21013</div>
<div class="t" style="left:115.40px;top:106.00px;font-size:6.45px;color:#1e1e1e;font-weight:bold;transform:scaleX(1.0000);transform-origin:0 0;">21013</div>
<div class="t" style="left:164.80px;top:106.00px;font-size:6.45px;color:#1e1e1e;font-weight:bold;transform:scaleX(0.8993);transform-origin:0 0;">ANTELOPE VALLEY FAMILY OPTOMETRY</div>
<div class="t" style="left:349.00px;top:106.00px;font-size:6.45px;color:#1e1e1e;font-weight:bold;transform:scaleX(0.8993);transform-origin:0 0;">ANTELOPE VALLEY FAMILY OPTOMETRY</div>
<div class="t" style="left:533.20px;top:106.00px;font-size:6.45px;color:#1e1e1e;font-weight:bold;transform:scaleX(1.0000);transform-origin:0 0;">0.00</div>
<div class="t" style="left:581.90px;top:106.00px;font-size:6.45px;color:#1e1e1e;font-weight:bold;transform:scaleX(1.0000);transform-origin:0 0;">100.00</div>
<div class="t" style="left:628.70px;top:106.00px;font-size:6.45px;color:#1e1e1e;font-weight:bold;transform:scaleX(0.9056);transform-origin:0 0;">NO_TAXAR</div>
<div class="t" style="left:680.80px;top:106.00px;font-size:6.45px;color:#1e1e1e;font-weight:bold;transform:scaleX(0.9119);transform-origin:0 0;">N/A</div>
<div class="t" style="left:769.80px;top:106.00px;font-size:6.45px;color:#141414;font-weight:bold;transform:scaleX(0.8700);transform-origin:0 0;">DALE</div>
<div class="a" style="left:0.0px;top:113.65px;width:900px;height:11.394444444444444px;background:#ffffff"></div>
<div class="t" style="left:4.00px;top:117.09px;font-size:6.45px;color:#1e1e1e;font-weight:bold;transform:scaleX(1.0000);transform-origin:0 0;">2009-11-18</div>
<div class="t" style="left:44.60px;top:117.09px;font-size:6.45px;color:#1e1e1e;font-weight:bold;transform:scaleX(1.0000);transform-origin:0 0;">I-428170</div>
<div class="t" style="left:82.70px;top:117.09px;font-size:6.45px;color:#1e1e1e;font-weight:bold;transform:scaleX(1.0000);transform-origin:0 0;">301</div>
<div class="t" style="left:115.40px;top:117.09px;font-size:6.45px;color:#1e1e1e;font-weight:bold;transform:scaleX(1.0000);transform-origin:0 0;">301</div>
<div class="t" style="left:164.80px;top:117.09px;font-size:6.45px;color:#1e1e1e;font-weight:bold;transform:scaleX(0.9004);transform-origin:0 0;">AUGUSTA EYE ASSOCIATES PLC</div>
<div class="t" style="left:349.00px;top:117.09px;font-size:6.45px;color:#1e1e1e;font-weight:bold;transform:scaleX(0.9004);transform-origin:0 0;">AUGUSTA EYE ASSOCIATES PLC</div>
<div class="t" style="left:533.20px;top:117.09px;font-size:6.45px;color:#1e1e1e;font-weight:bold;transform:scaleX(1.0000);transform-origin:0 0;">0.00</div>
<div class="t" style="left:581.90px;top:117.09px;font-size:6.45px;color:#1e1e1e;font-weight:bold;transform:scaleX(1.0000);transform-origin:0 0;">100.00</div>
<div class="t" style="left:628.70px;top:117.09px;font-size:6.45px;color:#1e1e1e;font-weight:bold;transform:scaleX(0.9056);transform-origin:0 0;">NO_TAXAR</div>
<div class="t" style="left:680.80px;top:117.09px;font-size:6.45px;color:#1e1e1e;font-weight:bold;transform:scaleX(0.9119);transform-origin:0 0;">N/A</div>
<div class="t" style="left:769.80px;top:117.09px;font-size:6.45px;color:#141414;font-weight:bold;transform:scaleX(0.8700);transform-origin:0 0;">SVILLE</div>
<div class="a" style="left:0.0px;top:124.74px;width:900px;height:11.394444444444444px;background:#f0f0f0"></div>
<div class="t" style="left:4.00px;top:128.18px;font-size:6.45px;color:#1e1e1e;font-weight:bold;transform:scaleX(1.0000);transform-origin:0 0;">2009-12-02</div>
<div class="t" style="left:44.60px;top:128.18px;font-size:6.45px;color:#1e1e1e;font-weight:bold;transform:scaleX(1.0000);transform-origin:0 0;">I-429228</div>
<div class="t" style="left:82.70px;top:128.18px;font-size:6.45px;color:#1e1e1e;font-weight:bold;transform:scaleX(1.0000);transform-origin:0 0;">5555</div>
<div class="t" style="left:115.40px;top:128.18px;font-size:6.45px;color:#1e1e1e;font-weight:bold;transform:scaleX(1.0000);transform-origin:0 0;">5555-3773</div>
<div class="t" style="left:164.80px;top:128.18px;font-size:6.45px;color:#1e1e1e;font-weight:bold;transform:scaleX(0.9199);transform-origin:0 0;">WAL-MART VISION CENTER #3773</div>
<div class="t" style="left:349.00px;top:128.18px;font-size:6.45px;color:#1e1e1e;font-weight:bold;transform:scaleX(0.9199);transform-origin:0 0;">WAL-MART VISION CENTER #3773</div>
<div class="t" style="left:533.20px;top:128.18px;font-size:6.45px;color:#1e1e1e;font-weight:bold;transform:scaleX(1.0000);transform-origin:0 0;">0.00</div>
<div class="t" style="left:581.90px;top:128.18px;font-size:6.45px;color:#1e1e1e;font-weight:bold;transform:scaleX(1.0000);transform-origin:0 0;">100.00</div>
<div class="t" style="left:628.70px;top:128.18px;font-size:6.45px;color:#1e1e1e;font-weight:bold;transform:scaleX(0.9056);transform-origin:0 0;">NO_TAXAR</div>
<div class="t" style="left:680.80px;top:128.18px;font-size:6.45px;color:#1e1e1e;font-weight:bold;transform:scaleX(0.9119);transform-origin:0 0;">N/A</div>
<div class="t" style="left:769.80px;top:128.18px;font-size:6.45px;color:#141414;font-weight:bold;transform:scaleX(0.8700);transform-origin:0 0;">WORTH</div>
<div class="a" style="left:0.0px;top:135.84px;width:900px;height:11.394444444444444px;background:#ffffff"></div>
<div class="t" style="left:4.00px;top:139.28px;font-size:6.45px;color:#1e1e1e;font-weight:bold;transform:scaleX(1.0000);transform-origin:0 0;">2009-12-22</div>
<div class="t" style="left:44.60px;top:139.28px;font-size:6.45px;color:#1e1e1e;font-weight:bold;transform:scaleX(1.0000);transform-origin:0 0;">I-430691</div>
<div class="t" style="left:82.70px;top:139.28px;font-size:6.45px;color:#1e1e1e;font-weight:bold;transform:scaleX(1.0000);transform-origin:0 0;">3950</div>
<div class="t" style="left:115.40px;top:139.28px;font-size:6.45px;color:#1e1e1e;font-weight:bold;transform:scaleX(1.0000);transform-origin:0 0;">3950-219</div>
<div class="t" style="left:164.80px;top:139.28px;font-size:6.45px;color:#1e1e1e;font-weight:bold;transform:scaleX(0.9198);transform-origin:0 0;">LENSCRAFTERS #219</div>
<div class="t" style="left:349.00px;top:139.28px;font-size:6.45px;color:#1e1e1e;font-weight:bold;transform:scaleX(0.9198);transform-origin:0 0;">LENSCRAFTERS #219</div>
<div class="t" style="left:533.20px;top:139.28px;font-size:6.45px;color:#1e1e1e;font-weight:bold;transform:scaleX(1.0000);transform-origin:0 0;">0.00</div>
<div class="t" style="left:581.90px;top:139.28px;font-size:6.45px;color:#1e1e1e;font-weight:bold;transform:scaleX(1.0000);transform-origin:0 0;">100.00</div>
<div class="t" style="left:628.70px;top:139.28px;font-size:6.45px;color:#1e1e1e;font-weight:bold;transform:scaleX(0.9056);transform-origin:0 0;">NO_TAXAR</div>
<div class="t" style="left:680.80px;top:139.28px;font-size:6.45px;color:#1e1e1e;font-weight:bold;transform:scaleX(0.9119);transform-origin:0 0;">N/A</div>
<div class="t" style="left:769.80px;top:139.28px;font-size:6.45px;color:#141414;font-weight:bold;transform:scaleX(0.8700);transform-origin:0 0;">N</div>
<div class="a" style="left:0.0px;top:146.93px;width:900px;height:11.394444444444444px;background:#f0f0f0"></div>
<div class="t" style="left:4.00px;top:150.37px;font-size:6.45px;color:#1e1e1e;font-weight:bold;transform:scaleX(1.0000);transform-origin:0 0;">2009-12-23</div>
<div class="t" style="left:44.60px;top:150.37px;font-size:6.45px;color:#1e1e1e;font-weight:bold;transform:scaleX(1.0000);transform-origin:0 0;">I-430867</div>
<div class="t" style="left:82.70px;top:150.37px;font-size:6.45px;color:#1e1e1e;font-weight:bold;transform:scaleX(1.0000);transform-origin:0 0;">1633</div>
<div class="t" style="left:115.40px;top:150.37px;font-size:6.45px;color:#1e1e1e;font-weight:bold;transform:scaleX(1.0000);transform-origin:0 0;">1633-20</div>
<div class="t" style="left:164.80px;top:150.37px;font-size:6.45px;color:#1e1e1e;font-weight:bold;transform:scaleX(0.9147);transform-origin:0 0;">EYEMART EXPRESS #20</div>
<div class="t" style="left:349.00px;top:150.37px;font-size:6.45px;color:#1e1e1e;font-weight:bold;transform:scaleX(0.9147);transform-origin:0 0;">EYEMART EXPRESS #20</div>
<div class="t" style="left:533.20px;top:150.37px;font-size:6.45px;color:#1e1e1e;font-weight:bold;transform:scaleX(1.0000);transform-origin:0 0;">0.00</div>
<div class="t" style="left:581.90px;top:150.37px;font-size:6.45px;color:#1e1e1e;font-weight:bold;transform:scaleX(1.0000);transform-origin:0 0;">100.00</div>
<div class="t" style="left:628.70px;top:150.37px;font-size:6.45px;color:#1e1e1e;font-weight:bold;transform:scaleX(0.9056);transform-origin:0 0;">NO_TAXAR</div>
<div class="t" style="left:680.80px;top:150.37px;font-size:6.45px;color:#1e1e1e;font-weight:bold;transform:scaleX(0.9119);transform-origin:0 0;">N/A</div>
<div class="a" style="left:0.0px;top:158.03px;width:900px;height:11.394444444444444px;background:#ffffff"></div>
<div class="t" style="left:4.00px;top:161.47px;font-size:6.45px;color:#1e1e1e;font-weight:bold;transform:scaleX(1.0000);transform-origin:0 0;">2009-12-28</div>
<div class="t" style="left:44.60px;top:161.47px;font-size:6.45px;color:#1e1e1e;font-weight:bold;transform:scaleX(1.0000);transform-origin:0 0;">I-430994</div>
<div class="t" style="left:82.70px;top:161.47px;font-size:6.45px;color:#1e1e1e;font-weight:bold;transform:scaleX(1.0000);transform-origin:0 0;">589</div>
<div class="t" style="left:115.40px;top:161.47px;font-size:6.45px;color:#1e1e1e;font-weight:bold;transform:scaleX(1.0000);transform-origin:0 0;">589</div>
<div class="t" style="left:164.80px;top:161.47px;font-size:6.45px;color:#1e1e1e;font-weight:bold;transform:scaleX(0.9067);transform-origin:0 0;">BRIGANCE, HAROLD O.D.</div>
<div class="t" style="left:349.00px;top:161.47px;font-size:6.45px;color:#1e1e1e;font-weight:bold;transform:scaleX(0.9067);transform-origin:0 0;">BRIGANCE, HAROLD O.D.</div>
<div class="t" style="left:533.20px;top:161.47px;font-size:6.45px;color:#1e1e1e;font-weight:bold;transform:scaleX(1.0000);transform-origin:0 0;">0.00</div>
<div class="t" style="left:581.90px;top:161.47px;font-size:6.45px;color:#1e1e1e;font-weight:bold;transform:scaleX(1.0000);transform-origin:0 0;">100.00</div>
<div class="t" style="left:628.70px;top:161.47px;font-size:6.45px;color:#1e1e1e;font-weight:bold;transform:scaleX(0.9056);transform-origin:0 0;">NO_TAXAR</div>
<div class="t" style="left:680.80px;top:161.47px;font-size:6.45px;color:#1e1e1e;font-weight:bold;transform:scaleX(0.9119);transform-origin:0 0;">N/A</div>
<div class="t" style="left:769.80px;top:161.47px;font-size:6.45px;color:#141414;font-weight:bold;transform:scaleX(0.8700);transform-origin:0 0;">ORD</div>
<div class="a" style="left:0.0px;top:169.12px;width:900px;height:11.394444444444444px;background:#f0f0f0"></div>
<div class="t" style="left:4.00px;top:172.56px;font-size:6.45px;color:#1e1e1e;font-weight:bold;transform:scaleX(1.0000);transform-origin:0 0;">2009-12-29</div>
<div class="t" style="left:44.60px;top:172.56px;font-size:6.45px;color:#1e1e1e;font-weight:bold;transform:scaleX(1.0000);transform-origin:0 0;">I-431040</div>
<div class="t" style="left:82.70px;top:172.56px;font-size:6.45px;color:#1e1e1e;font-weight:bold;transform:scaleX(1.0000);transform-origin:0 0;">179</div>
<div class="t" style="left:115.40px;top:172.56px;font-size:6.45px;color:#1e1e1e;font-weight:bold;transform:scaleX(1.0000);transform-origin:0 0;">179</div>
<div class="t" style="left:164.80px;top:172.56px;font-size:6.45px;color:#1e1e1e;font-weight:bold;transform:scaleX(0.9244);transform-origin:0 0;">A. C. O. LAB</div>
<div class="t" style="left:349.00px;top:172.56px;font-size:6.45px;color:#1e1e1e;font-weight:bold;transform:scaleX(0.9244);transform-origin:0 0;">A. C. O. LAB</div>
<div class="t" style="left:533.20px;top:172.56px;font-size:6.45px;color:#1e1e1e;font-weight:bold;transform:scaleX(1.0000);transform-origin:0 0;">0.00</div>
<div class="t" style="left:581.90px;top:172.56px;font-size:6.45px;color:#1e1e1e;font-weight:bold;transform:scaleX(1.0000);transform-origin:0 0;">100.00</div>
<div class="t" style="left:628.70px;top:172.56px;font-size:6.45px;color:#1e1e1e;font-weight:bold;transform:scaleX(0.9056);transform-origin:0 0;">NO_TAXAR</div>
<div class="t" style="left:680.80px;top:172.56px;font-size:6.45px;color:#1e1e1e;font-weight:bold;transform:scaleX(0.9119);transform-origin:0 0;">N/A</div>
<div class="t" style="left:769.80px;top:172.56px;font-size:6.45px;color:#141414;font-weight:bold;transform:scaleX(0.8700);transform-origin:0 0;">ERCE</div>
<div class="a" style="left:0.0px;top:180.22px;width:900px;height:11.394444444444444px;background:#ffffff"></div>
<div class="t" style="left:4.00px;top:183.66px;font-size:6.45px;color:#1e1e1e;font-weight:bold;transform:scaleX(1.0000);transform-origin:0 0;">2010-01-28</div>
<div class="t" style="left:44.60px;top:183.66px;font-size:6.45px;color:#1e1e1e;font-weight:bold;transform:scaleX(1.0000);transform-origin:0 0;">I-433716</div>
<div class="t" style="left:82.70px;top:183.66px;font-size:6.45px;color:#1e1e1e;font-weight:bold;transform:scaleX(1.0000);transform-origin:0 0;">4323</div>
<div class="t" style="left:115.40px;top:183.66px;font-size:6.45px;color:#1e1e1e;font-weight:bold;transform:scaleX(1.0000);transform-origin:0 0;">4323</div>
<div class="t" style="left:164.80px;top:183.66px;font-size:6.45px;color:#1e1e1e;font-weight:bold;transform:scaleX(0.8994);transform-origin:0 0;">ROBERTSON OPTICAL LAB</div>
<div class="t" style="left:349.00px;top:183.66px;font-size:6.45px;color:#1e1e1e;font-weight:bold;transform:scaleX(0.8994);transform-origin:0 0;">ROBERTSON OPTICAL LAB</div>
<div class="t" style="left:533.20px;top:183.66px;font-size:6.45px;color:#1e1e1e;font-weight:bold;transform:scaleX(1.0000);transform-origin:0 0;">0.00</div>
<div class="t" style="left:581.90px;top:183.66px;font-size:6.45px;color:#1e1e1e;font-weight:bold;transform:scaleX(1.0000);transform-origin:0 0;">100.00</div>
<div class="t" style="left:628.70px;top:183.66px;font-size:6.45px;color:#1e1e1e;font-weight:bold;transform:scaleX(0.9056);transform-origin:0 0;">NO_TAXAR</div>
<div class="t" style="left:680.80px;top:183.66px;font-size:6.45px;color:#1e1e1e;font-weight:bold;transform:scaleX(0.9119);transform-origin:0 0;">N/A</div>
<div class="t" style="left:769.80px;top:183.66px;font-size:6.45px;color:#141414;font-weight:bold;transform:scaleX(0.8700);transform-origin:0 0;">MBIA</div>
<div class="a" style="left:0.0px;top:191.31px;width:900px;height:11.394444444444444px;background:#f0f0f0"></div>
<div class="t" style="left:4.00px;top:194.75px;font-size:6.45px;color:#1e1e1e;font-weight:bold;transform:scaleX(1.0000);transform-origin:0 0;">2010-02-02</div>
<div class="t" style="left:44.60px;top:194.75px;font-size:6.45px;color:#1e1e1e;font-weight:bold;transform:scaleX(1.0000);transform-origin:0 0;">I-434266</div>
<div class="t" style="left:82.70px;top:194.75px;font-size:6.45px;color:#1e1e1e;font-weight:bold;transform:scaleX(1.0000);transform-origin:0 0;">3150</div>
<div class="t" style="left:115.40px;top:194.75px;font-size:6.45px;color:#1e1e1e;font-weight:bold;transform:scaleX(1.0000);transform-origin:0 0;">3150-1</div>
<div class="t" style="left:164.80px;top:194.75px;font-size:6.45px;color:#1e1e1e;font-weight:bold;transform:scaleX(0.8988);transform-origin:0 0;">MIGIZI OPTICAL CORPORATION</div>
<div class="t" style="left:349.00px;top:194.75px;font-size:6.45px;color:#1e1e1e;font-weight:bold;transform:scaleX(0.8988);transform-origin:0 0;">MIGIZI OPTICAL CORPORATION</div>
<div class="t" style="left:533.20px;top:194.75px;font-size:6.45px;color:#1e1e1e;font-weight:bold;transform:scaleX(1.0000);transform-origin:0 0;">0.00</div>
<div class="t" style="left:581.90px;top:194.75px;font-size:6.45px;color:#1e1e1e;font-weight:bold;transform:scaleX(1.0000);transform-origin:0 0;">100.00</div>
<div class="t" style="left:628.70px;top:194.75px;font-size:6.45px;color:#1e1e1e;font-weight:bold;transform:scaleX(0.9493);transform-origin:0 0;">MN600</div>
<div class="t" style="left:680.80px;top:194.75px;font-size:6.45px;color:#1e1e1e;font-weight:bold;transform:scaleX(0.9493);transform-origin:0 0;">MN600</div>
<div class="t" style="left:769.80px;top:194.75px;font-size:6.45px;color:#141414;font-weight:bold;transform:scaleX(0.8700);transform-origin:0 0;">OUD</div>
<div class="a" style="left:0.0px;top:202.41px;width:900px;height:11.394444444444444px;background:#ffffff"></div>
<div class="t" style="left:4.00px;top:205.85px;font-size:6.45px;color:#1e1e1e;font-weight:bold;transform:scaleX(1.0000);transform-origin:0 0;">2010-02-16</div>
<div class="t" style="left:44.60px;top:205.85px;font-size:6.45px;color:#1e1e1e;font-weight:bold;transform:scaleX(1.0000);transform-origin:0 0;">I-435268</div>
<div class="t" style="left:82.70px;top:205.85px;font-size:6.45px;color:#1e1e1e;font-weight:bold;transform:scaleX(1.0000);transform-origin:0 0;">288</div>
<div class="t" style="left:115.40px;top:205.85px;font-size:6.45px;color:#1e1e1e;font-weight:bold;transform:scaleX(1.0000);transform-origin:0 0;">288</div>
<div class="t" style="left:164.80px;top:205.85px;font-size:6.45px;color:#1e1e1e;font-weight:bold;transform:scaleX(0.9032);transform-origin:0 0;">SITE FOR SORE EYES</div>
<div class="t" style="left:349.00px;top:205.85px;font-size:6.45px;color:#1e1e1e;font-weight:bold;transform:scaleX(0.9032);transform-origin:0 0;">SITE FOR SORE EYES</div>
<div class="t" style="left:533.20px;top:205.85px;font-size:6.45px;color:#1e1e1e;font-weight:bold;transform:scaleX(1.0000);transform-origin:0 0;">0.00</div>
<div class="t" style="left:581.90px;top:205.85px;font-size:6.45px;color:#1e1e1e;font-weight:bold;transform:scaleX(1.0000);transform-origin:0 0;">100.00</div>
<div class="t" style="left:628.70px;top:205.85px;font-size:6.45px;color:#1e1e1e;font-weight:bold;transform:scaleX(0.9056);transform-origin:0 0;">NO_TAXAR</div>
<div class="t" style="left:680.80px;top:205.85px;font-size:6.45px;color:#1e1e1e;font-weight:bold;transform:scaleX(0.9119);transform-origin:0 0;">N/A</div>
<div class="t" style="left:769.80px;top:205.85px;font-size:6.45px;color:#141414;font-weight:bold;transform:scaleX(0.8700);transform-origin:0 0;">OOD</div>
<div class="a" style="left:0.0px;top:213.5px;width:900px;height:11.394444444444444px;background:#f0f0f0"></div>
<div class="t" style="left:4.00px;top:216.94px;font-size:6.45px;color:#1e1e1e;font-weight:bold;transform:scaleX(1.0000);transform-origin:0 0;">2010-02-17</div>
<div class="t" style="left:44.60px;top:216.94px;font-size:6.45px;color:#1e1e1e;font-weight:bold;transform:scaleX(1.0000);transform-origin:0 0;">I-435365</div>
<div class="t" style="left:82.70px;top:216.94px;font-size:6.45px;color:#1e1e1e;font-weight:bold;transform:scaleX(1.0000);transform-origin:0 0;">1633</div>
<div class="t" style="left:115.40px;top:216.94px;font-size:6.45px;color:#1e1e1e;font-weight:bold;transform:scaleX(1.0000);transform-origin:0 0;">1633-19</div>
<div class="t" style="left:164.80px;top:216.94px;font-size:6.45px;color:#1e1e1e;font-weight:bold;transform:scaleX(0.9147);transform-origin:0 0;">EYEMART EXPRESS #19</div>
<div class="t" style="left:349.00px;top:216.94px;font-size:6.45px;color:#1e1e1e;font-weight:bold;transform:scaleX(0.9147);transform-origin:0 0;">EYEMART EXPRESS #19</div>
<div class="t" style="left:533.20px;top:216.94px;font-size:6.45px;color:#1e1e1e;font-weight:bold;transform:scaleX(1.0000);transform-origin:0 0;">0.00</div>
<div class="t" style="left:581.90px;top:216.94px;font-size:6.45px;color:#1e1e1e;font-weight:bold;transform:scaleX(1.0000);transform-origin:0 0;">100.00</div>
<div class="t" style="left:628.70px;top:216.94px;font-size:6.45px;color:#1e1e1e;font-weight:bold;transform:scaleX(0.9056);transform-origin:0 0;">NO_TAXAR</div>
<div class="t" style="left:680.80px;top:216.94px;font-size:6.45px;color:#1e1e1e;font-weight:bold;transform:scaleX(0.9119);transform-origin:0 0;">N/A</div>
<div class="a" style="left:0.0px;top:224.59px;width:900px;height:11.394444444444444px;background:#ffffff"></div>
<div class="t" style="left:4.00px;top:228.03px;font-size:6.45px;color:#1e1e1e;font-weight:bold;transform:scaleX(1.0000);transform-origin:0 0;">2010-02-17</div>
<div class="t" style="left:44.60px;top:228.03px;font-size:6.45px;color:#1e1e1e;font-weight:bold;transform:scaleX(1.0000);transform-origin:0 0;">I-435381</div>
<div class="t" style="left:82.70px;top:228.03px;font-size:6.45px;color:#1e1e1e;font-weight:bold;transform:scaleX(1.0000);transform-origin:0 0;">1633</div>
<div class="t" style="left:115.40px;top:228.03px;font-size:6.45px;color:#1e1e1e;font-weight:bold;transform:scaleX(1.0000);transform-origin:0 0;">1633</div>
<div class="t" style="left:164.80px;top:228.03px;font-size:6.45px;color:#1e1e1e;font-weight:bold;transform:scaleX(0.8979);transform-origin:0 0;">EYEMART EXPRESS</div>
<div class="t" style="left:349.00px;top:228.03px;font-size:6.45px;color:#1e1e1e;font-weight:bold;transform:scaleX(0.8979);transform-origin:0 0;">EYEMART EXPRESS</div>
<div class="t" style="left:533.20px;top:228.03px;font-size:6.45px;color:#1e1e1e;font-weight:bold;transform:scaleX(1.0000);transform-origin:0 0;">0.00</div>
<div class="t" style="left:581.90px;top:228.03px;font-size:6.45px;color:#1e1e1e;font-weight:bold;transform:scaleX(1.0000);transform-origin:0 0;">100.00</div>
<div class="t" style="left:628.70px;top:228.03px;font-size:6.45px;color:#1e1e1e;font-weight:bold;transform:scaleX(0.9056);transform-origin:0 0;">NO_TAXAR</div>
<div class="t" style="left:680.80px;top:228.03px;font-size:6.45px;color:#1e1e1e;font-weight:bold;transform:scaleX(0.9119);transform-origin:0 0;">N/A</div>
<div class="t" style="left:769.80px;top:228.03px;font-size:6.45px;color:#141414;font-weight:bold;transform:scaleX(0.8700);transform-origin:0 0;">LLTON</div>
<div class="a" style="left:0.0px;top:235.69px;width:900px;height:11.394444444444444px;background:#f0f0f0"></div>
<div class="t" style="left:4.00px;top:239.13px;font-size:6.45px;color:#1e1e1e;font-weight:bold;transform:scaleX(1.0000);transform-origin:0 0;">2010-02-22</div>
<div class="t" style="left:44.60px;top:239.13px;font-size:6.45px;color:#1e1e1e;font-weight:bold;transform:scaleX(1.0000);transform-origin:0 0;">I-435789</div>
<div class="t" style="left:82.70px;top:239.13px;font-size:6.45px;color:#1e1e1e;font-weight:bold;transform:scaleX(1.0000);transform-origin:0 0;">20491</div>
<div class="t" style="left:115.40px;top:239.13px;font-size:6.45px;color:#1e1e1e;font-weight:bold;transform:scaleX(1.0000);transform-origin:0 0;">20491-1</div>
<div class="t" style="left:164.80px;top:239.13px;font-size:6.45px;color:#1e1e1e;font-weight:bold;transform:scaleX(0.8980);transform-origin:0 0;">LEFFLER EYECARE</div>
<div class="t" style="left:349.00px;top:239.13px;font-size:6.45px;color:#1e1e1e;font-weight:bold;transform:scaleX(0.8980);transform-origin:0 0;">LEFFLER EYECARE</div>
<div class="t" style="left:533.20px;top:239.13px;font-size:6.45px;color:#1e1e1e;font-weight:bold;transform:scaleX(1.0000);transform-origin:0 0;">0.00</div>
<div class="t" style="left:581.90px;top:239.13px;font-size:6.45px;color:#1e1e1e;font-weight:bold;transform:scaleX(1.0000);transform-origin:0 0;">100.00</div>
<div class="t" style="left:628.70px;top:239.13px;font-size:6.45px;color:#1e1e1e;font-weight:bold;transform:scaleX(0.9056);transform-origin:0 0;">NO_TAXAR</div>
<div class="t" style="left:680.80px;top:239.13px;font-size:6.45px;color:#1e1e1e;font-weight:bold;transform:scaleX(0.9119);transform-origin:0 0;">N/A</div>
<div class="t" style="left:769.80px;top:239.13px;font-size:6.45px;color:#141414;font-weight:bold;transform:scaleX(0.8700);transform-origin:0 0;">PALM</div>
<div class="a" style="left:0.0px;top:246.78px;width:900px;height:11.394444444444444px;background:#ffffff"></div>
<div class="t" style="left:4.00px;top:250.22px;font-size:6.45px;color:#1e1e1e;font-weight:bold;transform:scaleX(1.0000);transform-origin:0 0;">2010-02-22</div>
<div class="t" style="left:44.60px;top:250.22px;font-size:6.45px;color:#1e1e1e;font-weight:bold;transform:scaleX(1.0000);transform-origin:0 0;">I-435790</div>
<div class="t" style="left:82.70px;top:250.22px;font-size:6.45px;color:#1e1e1e;font-weight:bold;transform:scaleX(1.0000);transform-origin:0 0;">4216</div>
<div class="t" style="left:115.40px;top:250.22px;font-size:6.45px;color:#1e1e1e;font-weight:bold;transform:scaleX(1.0000);transform-origin:0 0;">4216</div>
<div class="t" style="left:164.80px;top:250.22px;font-size:6.45px;color:#1e1e1e;font-weight:bold;transform:scaleX(0.8979);transform-origin:0 0;">SCHMIDTS OPTICAL</div>
<div class="t" style="left:349.00px;top:250.22px;font-size:6.45px;color:#1e1e1e;font-weight:bold;transform:scaleX(0.8979);transform-origin:0 0;">SCHMIDTS OPTICAL</div>
<div class="t" style="left:533.20px;top:250.22px;font-size:6.45px;color:#1e1e1e;font-weight:bold;transform:scaleX(1.0000);transform-origin:0 0;">0.00</div>
<div class="t" style="left:581.90px;top:250.22px;font-size:6.45px;color:#1e1e1e;font-weight:bold;transform:scaleX(1.0000);transform-origin:0 0;">100.00</div>
<div class="t" style="left:628.70px;top:250.22px;font-size:6.45px;color:#1e1e1e;font-weight:bold;transform:scaleX(0.9056);transform-origin:0 0;">NO_TAXAR</div>
<div class="t" style="left:680.80px;top:250.22px;font-size:6.45px;color:#1e1e1e;font-weight:bold;transform:scaleX(0.9119);transform-origin:0 0;">N/A</div>
<div class="t" style="left:769.80px;top:250.22px;font-size:6.45px;color:#141414;font-weight:bold;transform:scaleX(0.8700);transform-origin:0 0;">T</div>
<div class="a" style="left:0.0px;top:257.88px;width:900px;height:11.394444444444444px;background:#f0f0f0"></div>
<div class="t" style="left:4.00px;top:261.32px;font-size:6.45px;color:#1e1e1e;font-weight:bold;transform:scaleX(1.0000);transform-origin:0 0;">2010-02-23</div>
<div class="t" style="left:44.60px;top:261.32px;font-size:6.45px;color:#1e1e1e;font-weight:bold;transform:scaleX(1.0000);transform-origin:0 0;">I-435905</div>
<div class="t" style="left:82.70px;top:261.32px;font-size:6.45px;color:#1e1e1e;font-weight:bold;transform:scaleX(1.0000);transform-origin:0 0;">5370</div>
<div class="t" style="left:115.40px;top:261.32px;font-size:6.45px;color:#1e1e1e;font-weight:bold;transform:scaleX(1.0000);transform-origin:0 0;">5370</div>
<div class="t" style="left:164.80px;top:261.32px;font-size:6.45px;color:#1e1e1e;font-weight:bold;transform:scaleX(0.9017);transform-origin:0 0;">VSP LAB</div>
<div class="t" style="left:349.00px;top:261.32px;font-size:6.45px;color:#1e1e1e;font-weight:bold;transform:scaleX(0.9017);transform-origin:0 0;">VSP LAB</div>
<div class="t" style="left:533.20px;top:261.32px;font-size:6.45px;color:#1e1e1e;font-weight:bold;transform:scaleX(1.0000);transform-origin:0 0;">0.00</div>
<div class="t" style="left:581.90px;top:261.32px;font-size:6.45px;color:#1e1e1e;font-weight:bold;transform:scaleX(1.0000);transform-origin:0 0;">100.00</div>
<div class="t" style="left:628.70px;top:261.32px;font-size:6.45px;color:#1e1e1e;font-weight:bold;transform:scaleX(0.9056);transform-origin:0 0;">NO_TAXAR</div>
<div class="t" style="left:680.80px;top:261.32px;font-size:6.45px;color:#1e1e1e;font-weight:bold;transform:scaleX(0.9119);transform-origin:0 0;">N/A</div>
<div class="t" style="left:769.80px;top:261.32px;font-size:6.45px;color:#141414;font-weight:bold;transform:scaleX(0.8700);transform-origin:0 0;">MENTO</div>
<div class="a" style="left:0.0px;top:268.97px;width:900px;height:11.394444444444444px;background:#ffffff"></div>
<div class="t" style="left:4.00px;top:272.41px;font-size:6.45px;color:#1e1e1e;font-weight:bold;transform:scaleX(1.0000);transform-origin:0 0;">2010-03-01</div>
<div class="t" style="left:44.60px;top:272.41px;font-size:6.45px;color:#1e1e1e;font-weight:bold;transform:scaleX(1.0000);transform-origin:0 0;">I-436668</div>
<div class="t" style="left:82.70px;top:272.41px;font-size:6.45px;color:#1e1e1e;font-weight:bold;transform:scaleX(1.0000);transform-origin:0 0;">20427</div>
<div class="t" style="left:115.40px;top:272.41px;font-size:6.45px;color:#1e1e1e;font-weight:bold;transform:scaleX(1.0000);transform-origin:0 0;">20427-1</div>
<div class="t" style="left:164.80px;top:272.41px;font-size:6.45px;color:#1e1e1e;font-weight:bold;transform:scaleX(0.9018);transform-origin:0 0;">DIGITAL EYE LAB</div>
<div class="t" style="left:349.00px;top:272.41px;font-size:6.45px;color:#1e1e1e;font-weight:bold;transform:scaleX(0.9018);transform-origin:0 0;">DIGITAL EYE LAB</div>
<div class="t" style="left:533.20px;top:272.41px;font-size:6.45px;color:#1e1e1e;font-weight:bold;transform:scaleX(1.0000);transform-origin:0 0;">0.00</div>
<div class="t" style="left:581.90px;top:272.41px;font-size:6.45px;color:#1e1e1e;font-weight:bold;transform:scaleX(1.0000);transform-origin:0 0;">100.00</div>
<div class="t" style="left:628.70px;top:272.41px;font-size:6.45px;color:#1e1e1e;font-weight:bold;transform:scaleX(0.9056);transform-origin:0 0;">NO_TAXAR</div>
<div class="t" style="left:680.80px;top:272.41px;font-size:6.45px;color:#1e1e1e;font-weight:bold;transform:scaleX(0.9119);transform-origin:0 0;">N/A</div>
<div class="t" style="left:769.80px;top:272.41px;font-size:6.45px;color:#141414;font-weight:bold;transform:scaleX(0.8700);transform-origin:0 0;">HORN</div>
<div class="a" style="left:0.0px;top:280.07px;width:900px;height:11.394444444444444px;background:#f0f0f0"></div>
<div class="t" style="left:4.00px;top:283.51px;font-size:6.45px;color:#1e1e1e;font-weight:bold;transform:scaleX(1.0000);transform-origin:0 0;">2010-03-11</div>
<div class="t" style="left:44.60px;top:283.51px;font-size:6.45px;color:#1e1e1e;font-weight:bold;transform:scaleX(1.0000);transform-origin:0 0;">I-437525</div>
<div class="t" style="left:82.70px;top:283.51px;font-size:6.45px;color:#1e1e1e;font-weight:bold;transform:scaleX(1.0000);transform-origin:0 0;">1633</div>
<div class="t" style="left:115.40px;top:283.51px;font-size:6.45px;color:#1e1e1e;font-weight:bold;transform:scaleX(1.0000);transform-origin:0 0;">1633-22</div>
<div class="t" style="left:164.80px;top:283.51px;font-size:6.45px;color:#1e1e1e;font-weight:bold;transform:scaleX(0.9230);transform-origin:0 0;">EYEMART EXPRESS #22 (Z6)</div>
<div class="t" style="left:349.00px;top:283.51px;font-size:6.45px;color:#1e1e1e;font-weight:bold;transform:scaleX(0.9230);transform-origin:0 0;">EYEMART EXPRESS #22 (Z6)</div>
<div class="t" style="left:533.20px;top:283.51px;font-size:6.45px;color:#1e1e1e;font-weight:bold;transform:scaleX(1.0000);transform-origin:0 0;">0.00</div>
<div class="t" style="left:581.90px;top:283.51px;font-size:6.45px;color:#1e1e1e;font-weight:bold;transform:scaleX(1.0000);transform-origin:0 0;">100.00</div>
<div class="t" style="left:628.70px;top:283.51px;font-size:6.45px;color:#1e1e1e;font-weight:bold;transform:scaleX(0.9056);transform-origin:0 0;">NO_TAXAR</div>
<div class="t" style="left:680.80px;top:283.51px;font-size:6.45px;color:#1e1e1e;font-weight:bold;transform:scaleX(0.9119);transform-origin:0 0;">N/A</div>
<div class="t" style="left:769.80px;top:283.51px;font-size:6.45px;color:#141414;font-weight:bold;transform:scaleX(0.8700);transform-origin:0 0;">NTON</div>
<div class="a" style="left:0.0px;top:291.16px;width:900px;height:11.394444444444444px;background:#ffffff"></div>
<div class="t" style="left:4.00px;top:294.60px;font-size:6.45px;color:#1e1e1e;font-weight:bold;transform:scaleX(1.0000);transform-origin:0 0;">2010-03-16</div>
<div class="t" style="left:44.60px;top:294.60px;font-size:6.45px;color:#1e1e1e;font-weight:bold;transform:scaleX(1.0000);transform-origin:0 0;">I-437908</div>
<div class="t" style="left:82.70px;top:294.60px;font-size:6.45px;color:#1e1e1e;font-weight:bold;transform:scaleX(1.0000);transform-origin:0 0;">3950</div>
<div class="t" style="left:115.40px;top:294.60px;font-size:6.45px;color:#1e1e1e;font-weight:bold;transform:scaleX(1.0000);transform-origin:0 0;">3950-738</div>
<div class="t" style="left:164.80px;top:294.60px;font-size:6.45px;color:#1e1e1e;font-weight:bold;transform:scaleX(0.9198);transform-origin:0 0;">LENSCRAFTERS #738</div>
<div class="t" style="left:349.00px;top:294.60px;font-size:6.45px;color:#1e1e1e;font-weight:bold;transform:scaleX(0.9198);transform-origin:0 0;">LENSCRAFTERS #738</div>
<div class="t" style="left:533.20px;top:294.60px;font-size:6.45px;color:#1e1e1e;font-weight:bold;transform:scaleX(1.0000);transform-origin:0 0;">0.00</div>
<div class="t" style="left:581.90px;top:294.60px;font-size:6.45px;color:#1e1e1e;font-weight:bold;transform:scaleX(1.0000);transform-origin:0 0;">100.00</div>
<div class="t" style="left:628.70px;top:294.60px;font-size:6.45px;color:#1e1e1e;font-weight:bold;transform:scaleX(0.9056);transform-origin:0 0;">NO_TAXAR</div>
<div class="t" style="left:680.80px;top:294.60px;font-size:6.45px;color:#1e1e1e;font-weight:bold;transform:scaleX(0.9119);transform-origin:0 0;">N/A</div>
<div class="a" style="left:0.0px;top:302.26px;width:900px;height:11.394444444444444px;background:#f0f0f0"></div>
<div class="t" style="left:4.00px;top:305.70px;font-size:6.45px;color:#1e1e1e;font-weight:bold;transform:scaleX(1.0000);transform-origin:0 0;">2010-03-17</div>
<div class="t" style="left:44.60px;top:305.70px;font-size:6.45px;color:#1e1e1e;font-weight:bold;transform:scaleX(1.0000);transform-origin:0 0;">I-437997</div>
<div class="t" style="left:82.70px;top:305.70px;font-size:6.45px;color:#1e1e1e;font-weight:bold;transform:scaleX(1.0000);transform-origin:0 0;">3950</div>
<div class="t" style="left:115.40px;top:305.70px;font-size:6.45px;color:#1e1e1e;font-weight:bold;transform:scaleX(1.0000);transform-origin:0 0;">3950-5642</div>
<div class="t" style="left:164.80px;top:305.70px;font-size:6.45px;color:#1e1e1e;font-weight:bold;transform:scaleX(0.9256);transform-origin:0 0;">LENSCRAFTERS # 5642</div>
<div class="t" style="left:349.00px;top:305.70px;font-size:6.45px;color:#1e1e1e;font-weight:bold;transform:scaleX(0.9256);transform-origin:0 0;">LENSCRAFTERS # 5642</div>
<div class="t" style="left:533.20px;top:305.70px;font-size:6.45px;color:#1e1e1e;font-weight:bold;transform:scaleX(1.0000);transform-origin:0 0;">0.00</div>
<div class="t" style="left:581.90px;top:305.70px;font-size:6.45px;color:#1e1e1e;font-weight:bold;transform:scaleX(1.0000);transform-origin:0 0;">100.00</div>
<div class="t" style="left:628.70px;top:305.70px;font-size:6.45px;color:#1e1e1e;font-weight:bold;transform:scaleX(0.9056);transform-origin:0 0;">NO_TAXAR</div>
<div class="t" style="left:680.80px;top:305.70px;font-size:6.45px;color:#1e1e1e;font-weight:bold;transform:scaleX(0.9119);transform-origin:0 0;">N/A</div>
<div class="t" style="left:769.80px;top:305.70px;font-size:6.45px;color:#141414;font-weight:bold;transform:scaleX(0.8700);transform-origin:0 0;">NATI</div>
<div class="a" style="left:0.0px;top:313.35px;width:900px;height:11.394444444444444px;background:#ffffff"></div>
<div class="t" style="left:4.00px;top:316.79px;font-size:6.45px;color:#1e1e1e;font-weight:bold;transform:scaleX(1.0000);transform-origin:0 0;">2010-03-19</div>
<div class="t" style="left:44.60px;top:316.79px;font-size:6.45px;color:#1e1e1e;font-weight:bold;transform:scaleX(1.0000);transform-origin:0 0;">I-438179</div>
<div class="t" style="left:82.70px;top:316.79px;font-size:6.45px;color:#1e1e1e;font-weight:bold;transform:scaleX(1.0000);transform-origin:0 0;">3150</div>
<div class="t" style="left:115.40px;top:316.79px;font-size:6.45px;color:#1e1e1e;font-weight:bold;transform:scaleX(1.0000);transform-origin:0 0;">3150-1</div>
<div class="t" style="left:164.80px;top:316.79px;font-size:6.45px;color:#1e1e1e;font-weight:bold;transform:scaleX(0.8988);transform-origin:0 0;">MIGIZI OPTICAL CORPORATION</div>
<div class="t" style="left:349.00px;top:316.79px;font-size:6.45px;color:#1e1e1e;font-weight:bold;transform:scaleX(0.8988);transform-origin:0 0;">MIGIZI OPTICAL CORPORATION</div>
<div class="t" style="left:533.20px;top:316.79px;font-size:6.45px;color:#1e1e1e;font-weight:bold;transform:scaleX(1.0000);transform-origin:0 0;">0.00</div>
<div class="t" style="left:581.90px;top:316.79px;font-size:6.45px;color:#1e1e1e;font-weight:bold;transform:scaleX(1.0000);transform-origin:0 0;">100.00</div>
<div class="t" style="left:628.70px;top:316.79px;font-size:6.45px;color:#1e1e1e;font-weight:bold;transform:scaleX(0.9493);transform-origin:0 0;">MN600</div>
<div class="t" style="left:680.80px;top:316.79px;font-size:6.45px;color:#1e1e1e;font-weight:bold;transform:scaleX(0.9493);transform-origin:0 0;">MN600</div>
<div class="t" style="left:769.80px;top:316.79px;font-size:6.45px;color:#141414;font-weight:bold;transform:scaleX(0.8700);transform-origin:0 0;">OUD</div>
<div class="a" style="left:0.0px;top:324.44px;width:900px;height:11.394444444444444px;background:#f0f0f0"></div>
<div class="t" style="left:4.00px;top:327.88px;font-size:6.45px;color:#1e1e1e;font-weight:bold;transform:scaleX(1.0000);transform-origin:0 0;">2010-03-26</div>
<div class="t" style="left:44.60px;top:327.88px;font-size:6.45px;color:#1e1e1e;font-weight:bold;transform:scaleX(1.0000);transform-origin:0 0;">I-438873</div>
<div class="t" style="left:82.70px;top:327.88px;font-size:6.45px;color:#1e1e1e;font-weight:bold;transform:scaleX(1.0000);transform-origin:0 0;">1843</div>
<div class="t" style="left:115.40px;top:327.88px;font-size:6.45px;color:#1e1e1e;font-weight:bold;transform:scaleX(1.0000);transform-origin:0 0;">1843</div>
<div class="t" style="left:164.80px;top:327.88px;font-size:6.45px;color:#1e1e1e;font-weight:bold;transform:scaleX(0.8987);transform-origin:0 0;">FREMONT OPTOMETRY CENTER</div>
<div class="t" style="left:349.00px;top:327.88px;font-size:6.45px;color:#1e1e1e;font-weight:bold;transform:scaleX(0.8987);transform-origin:0 0;">FREMONT OPTOMETRY CENTER</div>
<div class="t" style="left:533.20px;top:327.88px;font-size:6.45px;color:#1e1e1e;font-weight:bold;transform:scaleX(1.0000);transform-origin:0 0;">0.00</div>
<div class="t" style="left:581.90px;top:327.88px;font-size:6.45px;color:#1e1e1e;font-weight:bold;transform:scaleX(1.0000);transform-origin:0 0;">100.00</div>
<div class="t" style="left:628.70px;top:327.88px;font-size:6.45px;color:#1e1e1e;font-weight:bold;transform:scaleX(0.9056);transform-origin:0 0;">NO_TAXAR</div>
<div class="t" style="left:680.80px;top:327.88px;font-size:6.45px;color:#1e1e1e;font-weight:bold;transform:scaleX(0.9119);transform-origin:0 0;">N/A</div>
<div class="t" style="left:769.80px;top:327.88px;font-size:6.45px;color:#141414;font-weight:bold;transform:scaleX(0.8700);transform-origin:0 0;">MBRA</div>
<div class="a" style="left:0.0px;top:335.54px;width:900px;height:11.394444444444444px;background:#ffffff"></div>
<div class="t" style="left:4.00px;top:338.98px;font-size:6.45px;color:#1e1e1e;font-weight:bold;transform:scaleX(1.0000);transform-origin:0 0;">2010-03-30</div>
<div class="t" style="left:44.60px;top:338.98px;font-size:6.45px;color:#1e1e1e;font-weight:bold;transform:scaleX(1.0000);transform-origin:0 0;">I-439118</div>
<div class="t" style="left:82.70px;top:338.98px;font-size:6.45px;color:#1e1e1e;font-weight:bold;transform:scaleX(1.0000);transform-origin:0 0;">3150</div>
<div class="t" style="left:115.40px;top:338.98px;font-size:6.45px;color:#1e1e1e;font-weight:bold;transform:scaleX(1.0000);transform-origin:0 0;">3150-1</div>
<div class="t" style="left:164.80px;top:338.98px;font-size:6.45px;color:#1e1e1e;font-weight:bold;transform:scaleX(0.8988);transform-origin:0 0;">MIGIZI OPTICAL CORPORATION</div>
<div class="t" style="left:349.00px;top:338.98px;font-size:6.45px;color:#1e1e1e;font-weight:bold;transform:scaleX(0.8988);transform-origin:0 0;">MIGIZI OPTICAL CORPORATION</div>
<div class="t" style="left:533.20px;top:338.98px;font-size:6.45px;color:#1e1e1e;font-weight:bold;transform:scaleX(1.0000);transform-origin:0 0;">0.00</div>
<div class="t" style="left:581.90px;top:338.98px;font-size:6.45px;color:#1e1e1e;font-weight:bold;transform:scaleX(1.0000);transform-origin:0 0;">100.00</div>
<div class="t" style="left:628.70px;top:338.98px;font-size:6.45px;color:#1e1e1e;font-weight:bold;transform:scaleX(0.9493);transform-origin:0 0;">MN600</div>
<div class="t" style="left:680.80px;top:338.98px;font-size:6.45px;color:#1e1e1e;font-weight:bold;transform:scaleX(0.9493);transform-origin:0 0;">MN600</div>
<div class="t" style="left:769.80px;top:338.98px;font-size:6.45px;color:#141414;font-weight:bold;transform:scaleX(0.8700);transform-origin:0 0;">OUD</div>
<div class="a" style="left:0.0px;top:346.63px;width:900px;height:11.394444444444444px;background:#f0f0f0"></div>
<div class="t" style="left:4.00px;top:350.07px;font-size:6.45px;color:#1e1e1e;font-weight:bold;transform:scaleX(1.0000);transform-origin:0 0;">2010-03-31</div>
<div class="t" style="left:44.60px;top:350.07px;font-size:6.45px;color:#1e1e1e;font-weight:bold;transform:scaleX(1.0000);transform-origin:0 0;">I-439276</div>
<div class="t" style="left:82.70px;top:350.07px;font-size:6.45px;color:#1e1e1e;font-weight:bold;transform:scaleX(1.0000);transform-origin:0 0;">3150</div>
<div class="t" style="left:115.40px;top:350.07px;font-size:6.45px;color:#1e1e1e;font-weight:bold;transform:scaleX(1.0000);transform-origin:0 0;">3150-1</div>
<div class="t" style="left:164.80px;top:350.07px;font-size:6.45px;color:#1e1e1e;font-weight:bold;transform:scaleX(0.8988);transform-origin:0 0;">MIGIZI OPTICAL CORPORATION</div>
<div class="t" style="left:349.00px;top:350.07px;font-size:6.45px;color:#1e1e1e;font-weight:bold;transform:scaleX(0.8988);transform-origin:0 0;">MIGIZI OPTICAL CORPORATION</div>
<div class="t" style="left:533.20px;top:350.07px;font-size:6.45px;color:#1e1e1e;font-weight:bold;transform:scaleX(1.0000);transform-origin:0 0;">0.00</div>
<div class="t" style="left:581.90px;top:350.07px;font-size:6.45px;color:#1e1e1e;font-weight:bold;transform:scaleX(1.0000);transform-origin:0 0;">100.00</div>
<div class="t" style="left:628.70px;top:350.07px;font-size:6.45px;color:#1e1e1e;font-weight:bold;transform:scaleX(0.9493);transform-origin:0 0;">MN600</div>
<div class="t" style="left:680.80px;top:350.07px;font-size:6.45px;color:#1e1e1e;font-weight:bold;transform:scaleX(0.9493);transform-origin:0 0;">MN600</div>
<div class="t" style="left:769.80px;top:350.07px;font-size:6.45px;color:#141414;font-weight:bold;transform:scaleX(0.8700);transform-origin:0 0;">OUD</div>
<div class="a" style="left:0.0px;top:357.73px;width:900px;height:11.394444444444444px;background:#ffffff"></div>
<div class="t" style="left:4.00px;top:361.17px;font-size:6.45px;color:#1e1e1e;font-weight:bold;transform:scaleX(1.0000);transform-origin:0 0;">2010-04-06</div>
<div class="t" style="left:44.60px;top:361.17px;font-size:6.45px;color:#1e1e1e;font-weight:bold;transform:scaleX(1.0000);transform-origin:0 0;">I-439659</div>
<div class="t" style="left:82.70px;top:361.17px;font-size:6.45px;color:#1e1e1e;font-weight:bold;transform:scaleX(1.0000);transform-origin:0 0;">1633</div>
<div class="t" style="left:115.40px;top:361.17px;font-size:6.45px;color:#1e1e1e;font-weight:bold;transform:scaleX(1.0000);transform-origin:0 0;">1633-46</div>
<div class="t" style="left:164.80px;top:361.17px;font-size:6.45px;color:#1e1e1e;font-weight:bold;transform:scaleX(0.9147);transform-origin:0 0;">EYEMART EXPRESS #46</div>
<div class="t" style="left:349.00px;top:361.17px;font-size:6.45px;color:#1e1e1e;font-weight:bold;transform:scaleX(0.9147);transform-origin:0 0;">EYEMART EXPRESS #46</div>
<div class="t" style="left:533.20px;top:361.17px;font-size:6.45px;color:#1e1e1e;font-weight:bold;transform:scaleX(1.0000);transform-origin:0 0;">0.00</div>
<div class="t" style="left:581.90px;top:361.17px;font-size:6.45px;color:#1e1e1e;font-weight:bold;transform:scaleX(1.0000);transform-origin:0 0;">100.00</div>
<div class="t" style="left:628.70px;top:361.17px;font-size:6.45px;color:#1e1e1e;font-weight:bold;transform:scaleX(0.9056);transform-origin:0 0;">NO_TAXAR</div>
<div class="t" style="left:680.80px;top:361.17px;font-size:6.45px;color:#1e1e1e;font-weight:bold;transform:scaleX(0.9119);transform-origin:0 0;">N/A</div>
<div class="t" style="left:769.80px;top:361.17px;font-size:6.45px;color:#141414;font-weight:bold;transform:scaleX(0.8700);transform-origin:0 0;">SBURG</div>
<div class="a" style="left:0.0px;top:368.82px;width:900px;height:11.394444444444444px;background:#f0f0f0"></div>
<div class="t" style="left:4.00px;top:372.26px;font-size:6.45px;color:#1e1e1e;font-weight:bold;transform:scaleX(1.0000);transform-origin:0 0;">2010-04-06</div>
<div class="t" style="left:44.60px;top:372.26px;font-size:6.45px;color:#1e1e1e;font-weight:bold;transform:scaleX(1.0000);transform-origin:0 0;">I-439671</div>
<div class="t" style="left:82.70px;top:372.26px;font-size:6.45px;color:#1e1e1e;font-weight:bold;transform:scaleX(1.0000);transform-origin:0 0;">1633</div>
<div class="t" style="left:115.40px;top:372.26px;font-size:6.45px;color:#1e1e1e;font-weight:bold;transform:scaleX(1.0000);transform-origin:0 0;">1633-60</div>
<div class="t" style="left:164.80px;top:372.26px;font-size:6.45px;color:#1e1e1e;font-weight:bold;transform:scaleX(0.9230);transform-origin:0 0;">EYEMART EXPRESS #60 (Z6)</div>
<div class="t" style="left:349.00px;top:372.26px;font-size:6.45px;color:#1e1e1e;font-weight:bold;transform:scaleX(0.9230);transform-origin:0 0;">EYEMART EXPRESS #60 (Z6)</div>
<div class="t" style="left:533.20px;top:372.26px;font-size:6.45px;color:#1e1e1e;font-weight:bold;transform:scaleX(1.0000);transform-origin:0 0;">0.00</div>
<div class="t" style="left:581.90px;top:372.26px;font-size:6.45px;color:#1e1e1e;font-weight:bold;transform:scaleX(1.0000);transform-origin:0 0;">100.00</div>
<div class="t" style="left:628.70px;top:372.26px;font-size:6.45px;color:#1e1e1e;font-weight:bold;transform:scaleX(0.9056);transform-origin:0 0;">NO_TAXAR</div>
<div class="t" style="left:680.80px;top:372.26px;font-size:6.45px;color:#1e1e1e;font-weight:bold;transform:scaleX(0.9119);transform-origin:0 0;">N/A</div>
<div class="t" style="left:769.80px;top:372.26px;font-size:6.45px;color:#141414;font-weight:bold;transform:scaleX(0.8700);transform-origin:0 0;">NTON</div>
<div class="a" style="left:0.0px;top:379.92px;width:900px;height:11.394444444444444px;background:#ffffff"></div>
<div class="t" style="left:4.00px;top:383.36px;font-size:6.45px;color:#1e1e1e;font-weight:bold;transform:scaleX(1.0000);transform-origin:0 0;">2010-04-06</div>
<div class="t" style="left:44.60px;top:383.36px;font-size:6.45px;color:#1e1e1e;font-weight:bold;transform:scaleX(1.0000);transform-origin:0 0;">I-439694</div>
<div class="t" style="left:82.70px;top:383.36px;font-size:6.45px;color:#1e1e1e;font-weight:bold;transform:scaleX(1.0000);transform-origin:0 0;">1633</div>
<div class="t" style="left:115.40px;top:383.36px;font-size:6.45px;color:#1e1e1e;font-weight:bold;transform:scaleX(1.0000);transform-origin:0 0;">1633-9</div>
<div class="t" style="left:164.80px;top:383.36px;font-size:6.45px;color:#1e1e1e;font-weight:bold;transform:scaleX(0.9105);transform-origin:0 0;">EYEMART EXPRESS #9</div>
<div class="t" style="left:349.00px;top:383.36px;font-size:6.45px;color:#1e1e1e;font-weight:bold;transform:scaleX(0.9105);transform-origin:0 0;">EYEMART EXPRESS #9</div>
<div class="t" style="left:533.20px;top:383.36px;font-size:6.45px;color:#1e1e1e;font-weight:bold;transform:scaleX(1.0000);transform-origin:0 0;">0.00</div>
<div class="t" style="left:581.90px;top:383.36px;font-size:6.45px;color:#1e1e1e;font-weight:bold;transform:scaleX(1.0000);transform-origin:0 0;">100.00</div>
<div class="t" style="left:628.70px;top:383.36px;font-size:6.45px;color:#1e1e1e;font-weight:bold;transform:scaleX(0.9056);transform-origin:0 0;">NO_TAXAR</div>
<div class="t" style="left:680.80px;top:383.36px;font-size:6.45px;color:#1e1e1e;font-weight:bold;transform:scaleX(0.9119);transform-origin:0 0;">N/A</div>
<div class="t" style="left:769.80px;top:383.36px;font-size:6.45px;color:#141414;font-weight:bold;transform:scaleX(0.8700);transform-origin:0 0;">CK</div>
<div class="a" style="left:0.0px;top:391.01px;width:900px;height:11.394444444444444px;background:#f0f0f0"></div>
<div class="t" style="left:4.00px;top:394.45px;font-size:6.45px;color:#1e1e1e;font-weight:bold;transform:scaleX(1.0000);transform-origin:0 0;">2010-04-13</div>
<div class="t" style="left:44.60px;top:394.45px;font-size:6.45px;color:#1e1e1e;font-weight:bold;transform:scaleX(1.0000);transform-origin:0 0;">I-440308</div>
<div class="t" style="left:82.70px;top:394.45px;font-size:6.45px;color:#1e1e1e;font-weight:bold;transform:scaleX(1.0000);transform-origin:0 0;">1633</div>
<div class="t" style="left:115.40px;top:394.45px;font-size:6.45px;color:#1e1e1e;font-weight:bold;transform:scaleX(1.0000);transform-origin:0 0;">1633-26</div>
<div class="t" style="left:164.80px;top:394.45px;font-size:6.45px;color:#1e1e1e;font-weight:bold;transform:scaleX(0.9230);transform-origin:0 0;">EYEMART EXPRESS #26 (Z6)</div>
<div class="t" style="left:349.00px;top:394.45px;font-size:6.45px;color:#1e1e1e;font-weight:bold;transform:scaleX(0.9230);transform-origin:0 0;">EYEMART EXPRESS #26 (Z6)</div>
<div class="t" style="left:533.20px;top:394.45px;font-size:6.45px;color:#1e1e1e;font-weight:bold;transform:scaleX(1.0000);transform-origin:0 0;">0.00</div>
<div class="t" style="left:581.90px;top:394.45px;font-size:6.45px;color:#1e1e1e;font-weight:bold;transform:scaleX(1.0000);transform-origin:0 0;">100.00</div>
<div class="t" style="left:628.70px;top:394.45px;font-size:6.45px;color:#1e1e1e;font-weight:bold;transform:scaleX(0.9056);transform-origin:0 0;">NO_TAXAR</div>
<div class="t" style="left:680.80px;top:394.45px;font-size:6.45px;color:#1e1e1e;font-weight:bold;transform:scaleX(0.9119);transform-origin:0 0;">N/A</div>
<div class="t" style="left:769.80px;top:394.45px;font-size:6.45px;color:#141414;font-weight:bold;transform:scaleX(0.8700);transform-origin:0 0;">D</div>
<div class="a" style="left:0.0px;top:402.11px;width:900px;height:11.394444444444444px;background:#ffffff"></div>
<div class="t" style="left:4.00px;top:405.55px;font-size:6.45px;color:#1e1e1e;font-weight:bold;transform:scaleX(1.0000);transform-origin:0 0;">2010-04-16</div>
<div class="t" style="left:44.60px;top:405.55px;font-size:6.45px;color:#1e1e1e;font-weight:bold;transform:scaleX(1.0000);transform-origin:0 0;">I-440717</div>
<div class="t" style="left:82.70px;top:405.55px;font-size:6.45px;color:#1e1e1e;font-weight:bold;transform:scaleX(1.0000);transform-origin:0 0;">20411</div>
<div class="t" style="left:115.40px;top:405.55px;font-size:6.45px;color:#1e1e1e;font-weight:bold;transform:scaleX(1.0000);transform-origin:0 0;">20411-2</div>
<div class="t" style="left:164.80px;top:405.55px;font-size:6.45px;color:#1e1e1e;font-weight:bold;transform:scaleX(0.9012);transform-origin:0 0;">DUFFENS OPTICAL CO./INDIANAPOLIS</div>
<div class="t" style="left:349.00px;top:405.55px;font-size:6.45px;color:#1e1e1e;font-weight:bold;transform:scaleX(0.9012);transform-origin:0 0;">DUFFENS OPTICAL CO./INDIANAPOLIS</div>
<div class="t" style="left:533.20px;top:405.55px;font-size:6.45px;color:#1e1e1e;font-weight:bold;transform:scaleX(1.0000);transform-origin:0 0;">0.00</div>
<div class="t" style="left:581.90px;top:405.55px;font-size:6.45px;color:#1e1e1e;font-weight:bold;transform:scaleX(1.0000);transform-origin:0 0;">100.00</div>
<div class="t" style="left:628.70px;top:405.55px;font-size:6.45px;color:#1e1e1e;font-weight:bold;transform:scaleX(0.9056);transform-origin:0 0;">NO_TAXAR</div>
<div class="t" style="left:680.80px;top:405.55px;font-size:6.45px;color:#1e1e1e;font-weight:bold;transform:scaleX(0.9119);transform-origin:0 0;">N/A</div>
<div class="t" style="left:769.80px;top:405.55px;font-size:6.45px;color:#141414;font-weight:bold;transform:scaleX(0.8700);transform-origin:0 0;">IAPOLIS</div>
<div class="a" style="left:0.0px;top:413.2px;width:900px;height:11.394444444444444px;background:#f0f0f0"></div>
<div class="t" style="left:4.00px;top:416.64px;font-size:6.45px;color:#1e1e1e;font-weight:bold;transform:scaleX(1.0000);transform-origin:0 0;">2010-04-21</div>
<div class="t" style="left:44.60px;top:416.64px;font-size:6.45px;color:#1e1e1e;font-weight:bold;transform:scaleX(1.0000);transform-origin:0 0;">I-441051</div>
<div class="t" style="left:82.70px;top:416.64px;font-size:6.45px;color:#1e1e1e;font-weight:bold;transform:scaleX(1.0000);transform-origin:0 0;">1633</div>
<div class="t" style="left:115.40px;top:416.64px;font-size:6.45px;color:#1e1e1e;font-weight:bold;transform:scaleX(1.0000);transform-origin:0 0;">1633-16</div>
<div class="t" style="left:164.80px;top:416.64px;font-size:6.45px;color:#1e1e1e;font-weight:bold;transform:scaleX(0.9147);transform-origin:0 0;">EYEMART EXPRESS #16</div>
<div class="t" style="left:349.00px;top:416.64px;font-size:6.45px;color:#1e1e1e;font-weight:bold;transform:scaleX(0.9147);transform-origin:0 0;">EYEMART EXPRESS #16</div>
<div class="t" style="left:533.20px;top:416.64px;font-size:6.45px;color:#1e1e1e;font-weight:bold;transform:scaleX(1.0000);transform-origin:0 0;">0.00</div>
<div class="t" style="left:581.90px;top:416.64px;font-size:6.45px;color:#1e1e1e;font-weight:bold;transform:scaleX(1.0000);transform-origin:0 0;">100.00</div>
<div class="t" style="left:628.70px;top:416.64px;font-size:6.45px;color:#1e1e1e;font-weight:bold;transform:scaleX(0.9056);transform-origin:0 0;">NO_TAXAR</div>
<div class="t" style="left:680.80px;top:416.64px;font-size:6.45px;color:#1e1e1e;font-weight:bold;transform:scaleX(0.9119);transform-origin:0 0;">N/A</div>
<div class="t" style="left:769.80px;top:416.64px;font-size:6.45px;color:#141414;font-weight:bold;transform:scaleX(0.8700);transform-origin:0 0;">LLO</div>
<div class="a" style="left:0.0px;top:424.29px;width:900px;height:11.394444444444444px;background:#ffffff"></div>
<div class="t" style="left:4.00px;top:427.73px;font-size:6.45px;color:#1e1e1e;font-weight:bold;transform:scaleX(1.0000);transform-origin:0 0;">2010-04-28</div>
<div class="t" style="left:44.60px;top:427.73px;font-size:6.45px;color:#1e1e1e;font-weight:bold;transform:scaleX(1.0000);transform-origin:0 0;">I-441648</div>
<div class="t" style="left:82.70px;top:427.73px;font-size:6.45px;color:#1e1e1e;font-weight:bold;transform:scaleX(1.0000);transform-origin:0 0;">3195</div>
<div class="t" style="left:115.40px;top:427.73px;font-size:6.45px;color:#1e1e1e;font-weight:bold;transform:scaleX(1.0000);transform-origin:0 0;">3195</div>
<div class="t" style="left:164.80px;top:427.73px;font-size:6.45px;color:#1e1e1e;font-weight:bold;transform:scaleX(0.8980);transform-origin:0 0;">MODERN EYEWEAR</div>
<div class="t" style="left:349.00px;top:427.73px;font-size:6.45px;color:#1e1e1e;font-weight:bold;transform:scaleX(0.8980);transform-origin:0 0;">MODERN EYEWEAR</div>
<div class="t" style="left:533.20px;top:427.73px;font-size:6.45px;color:#1e1e1e;font-weight:bold;transform:scaleX(1.0000);transform-origin:0 0;">0.00</div>
<div class="t" style="left:581.90px;top:427.73px;font-size:6.45px;color:#1e1e1e;font-weight:bold;transform:scaleX(1.0000);transform-origin:0 0;">565.00</div>
<div class="t" style="left:628.70px;top:427.73px;font-size:6.45px;color:#1e1e1e;font-weight:bold;transform:scaleX(0.9407);transform-origin:0 0;">CA30</div>
<div class="t" style="left:680.80px;top:427.73px;font-size:6.45px;color:#1e1e1e;font-weight:bold;transform:scaleX(0.8996);transform-origin:0 0;">CA-AGAMAHXU</div>
<div class="t" style="left:749.20px;top:427.73px;font-size:6.45px;color:#1e1e1e;font-weight:bold;transform:scaleX(0.8991);transform-origin:0 0;">LAKE FOREST</div>
<div class="a" style="left:0.0px;top:435.39px;width:900px;height:11.394444444444444px;background:#f0f0f0"></div>
<div class="t" style="left:4.00px;top:438.83px;font-size:6.45px;color:#1e1e1e;font-weight:bold;transform:scaleX(1.0000);transform-origin:0 0;">2009-10-20</div>
<div class="t" style="left:44.60px;top:438.83px;font-size:6.45px;color:#1e1e1e;font-weight:bold;transform:scaleX(1.0000);transform-origin:0 0;">I-425979</div>
<div class="t" style="left:82.70px;top:438.83px;font-size:6.45px;color:#1e1e1e;font-weight:bold;transform:scaleX(1.0000);transform-origin:0 0;">15121</div>
<div class="t" style="left:115.40px;top:438.83px;font-size:6.45px;color:#1e1e1e;font-weight:bold;transform:scaleX(1.0000);transform-origin:0 0;">15121</div>
<div class="t" style="left:164.80px;top:438.83px;font-size:6.45px;color:#1e1e1e;font-weight:bold;transform:scaleX(0.9070);transform-origin:0 0;">EYE PROS LAB, INC</div>
<div class="t" style="left:349.00px;top:438.83px;font-size:6.45px;color:#1e1e1e;font-weight:bold;transform:scaleX(0.9070);transform-origin:0 0;">EYE PROS LAB, INC</div>
<div class="t" style="left:533.20px;top:438.83px;font-size:6.45px;color:#1e1e1e;font-weight:bold;transform:scaleX(1.0000);transform-origin:0 0;">0.00</div>
<div class="t" style="left:581.90px;top:438.83px;font-size:6.45px;color:#1e1e1e;font-weight:bold;transform:scaleX(1.0000);transform-origin:0 0;">123.47</div>
<div class="t" style="left:628.70px;top:438.83px;font-size:6.45px;color:#1e1e1e;font-weight:bold;transform:scaleX(0.9056);transform-origin:0 0;">NO_TAXAR</div>
<div class="t" style="left:680.80px;top:438.83px;font-size:6.45px;color:#1e1e1e;font-weight:bold;transform:scaleX(0.9407);transform-origin:0 0;">CA50</div>
<div class="t" style="left:749.20px;top:438.83px;font-size:6.45px;color:#1e1e1e;font-weight:bold;transform:scaleX(0.8950);transform-origin:0 0;">TURLOCK</div>
<div class="a" style="left:0.0px;top:446.48px;width:900px;height:11.394444444444444px;background:#ffffff"></div>
<div class="t" style="left:4.00px;top:449.92px;font-size:6.45px;color:#1e1e1e;font-weight:bold;transform:scaleX(1.0000);transform-origin:0 0;">2009-10-22</div>
<div class="t" style="left:44.60px;top:449.92px;font-size:6.45px;color:#1e1e1e;font-weight:bold;transform:scaleX(1.0000);transform-origin:0 0;">I-426232</div>
<div class="t" style="left:82.70px;top:449.92px;font-size:6.45px;color:#1e1e1e;font-weight:bold;transform:scaleX(1.0000);transform-origin:0 0;">5370</div>
<div class="t" style="left:115.40px;top:449.92px;font-size:6.45px;color:#1e1e1e;font-weight:bold;transform:scaleX(1.0000);transform-origin:0 0;">5370</div>
<div class="t" style="left:164.80px;top:449.92px;font-size:6.45px;color:#1e1e1e;font-weight:bold;transform:scaleX(0.9017);transform-origin:0 0;">VSP LAB</div>
<div class="t" style="left:349.00px;top:449.92px;font-size:6.45px;color:#1e1e1e;font-weight:bold;transform:scaleX(0.9017);transform-origin:0 0;">VSP LAB</div>
<div class="t" style="left:533.20px;top:449.92px;font-size:6.45px;color:#1e1e1e;font-weight:bold;transform:scaleX(1.0000);transform-origin:0 0;">0.00</div>
<div class="t" style="left:581.90px;top:449.92px;font-size:6.45px;color:#1e1e1e;font-weight:bold;transform:scaleX(1.0000);transform-origin:0 0;">1334.81</div>
<div class="t" style="left:628.70px;top:449.92px;font-size:6.45px;color:#1e1e1e;font-weight:bold;transform:scaleX(0.9056);transform-origin:0 0;">NO_TAXAR</div>
<div class="t" style="left:680.80px;top:449.92px;font-size:6.45px;color:#1e1e1e;font-weight:bold;transform:scaleX(0.9407);transform-origin:0 0;">CA34</div>
<div class="t" style="left:749.20px;top:449.92px;font-size:6.45px;color:#1e1e1e;font-weight:bold;transform:scaleX(0.8950);transform-origin:0 0;">SACRAMENTO</div>
<div class="a" style="left:0.0px;top:24.8px;width:900px;height:1px;background:#b4b4b4"></div>
<div class="a" style="left:0.0px;top:35.8px;width:900px;height:1px;background:#b4b4b4"></div>
<div class="a" style="left:0.0px;top:46.8px;width:900px;height:1px;background:#b4b4b4"></div>
<div class="a" style="left:0.0px;top:57.8px;width:900px;height:1px;background:#b4b4b4"></div>
<div class="a" style="left:0.0px;top:68.8px;width:900px;height:1px;background:#b4b4b4"></div>
<div class="a" style="left:0.0px;top:79.8px;width:900px;height:1px;background:#b4b4b4"></div>
<div class="a" style="left:0.0px;top:90.8px;width:900px;height:1px;background:#b4b4b4"></div>
<div class="a" style="left:0.0px;top:101.8px;width:900px;height:1px;background:#b4b4b4"></div>
<div class="a" style="left:0.0px;top:112.8px;width:900px;height:1px;background:#b4b4b4"></div>
<div class="a" style="left:0.0px;top:123.8px;width:900px;height:1px;background:#b4b4b4"></div>
<div class="a" style="left:0.0px;top:135.8px;width:900px;height:1px;background:#b4b4b4"></div>
<div class="a" style="left:0.0px;top:146.8px;width:900px;height:1px;background:#b4b4b4"></div>
<div class="a" style="left:0.0px;top:157.8px;width:900px;height:1px;background:#b4b4b4"></div>
<div class="a" style="left:0.0px;top:168.8px;width:900px;height:1px;background:#b4b4b4"></div>
<div class="a" style="left:0.0px;top:179.8px;width:900px;height:1px;background:#b4b4b4"></div>
<div class="a" style="left:0.0px;top:190.8px;width:900px;height:1px;background:#b4b4b4"></div>
<div class="a" style="left:0.0px;top:201.8px;width:900px;height:1px;background:#b4b4b4"></div>
<div class="a" style="left:0.0px;top:212.8px;width:900px;height:1px;background:#b4b4b4"></div>
<div class="a" style="left:0.0px;top:223.8px;width:900px;height:1px;background:#b4b4b4"></div>
<div class="a" style="left:0.0px;top:234.8px;width:900px;height:1px;background:#b4b4b4"></div>
<div class="a" style="left:0.0px;top:245.8px;width:900px;height:1px;background:#b4b4b4"></div>
<div class="a" style="left:0.0px;top:257.8px;width:900px;height:1px;background:#b4b4b4"></div>
<div class="a" style="left:0.0px;top:268.8px;width:900px;height:1px;background:#b4b4b4"></div>
<div class="a" style="left:0.0px;top:279.8px;width:900px;height:1px;background:#b4b4b4"></div>
<div class="a" style="left:0.0px;top:290.8px;width:900px;height:1px;background:#b4b4b4"></div>
<div class="a" style="left:0.0px;top:301.8px;width:900px;height:1px;background:#b4b4b4"></div>
<div class="a" style="left:0.0px;top:312.8px;width:900px;height:1px;background:#b4b4b4"></div>
<div class="a" style="left:0.0px;top:323.8px;width:900px;height:1px;background:#b4b4b4"></div>
<div class="a" style="left:0.0px;top:334.8px;width:900px;height:1px;background:#b4b4b4"></div>
<div class="a" style="left:0.0px;top:345.8px;width:900px;height:1px;background:#b4b4b4"></div>
<div class="a" style="left:0.0px;top:356.8px;width:900px;height:1px;background:#b4b4b4"></div>
<div class="a" style="left:0.0px;top:368.8px;width:900px;height:1px;background:#b4b4b4"></div>
<div class="a" style="left:0.0px;top:379.8px;width:900px;height:1px;background:#b4b4b4"></div>
<div class="a" style="left:0.0px;top:390.8px;width:900px;height:1px;background:#b4b4b4"></div>
<div class="a" style="left:0.0px;top:401.8px;width:900px;height:1px;background:#b4b4b4"></div>
<div class="a" style="left:0.0px;top:412.8px;width:900px;height:1px;background:#b4b4b4"></div>
<div class="a" style="left:0.0px;top:423.8px;width:900px;height:1px;background:#b4b4b4"></div>
<div class="a" style="left:0.0px;top:434.8px;width:900px;height:1px;background:#b4b4b4"></div>
<div class="a" style="left:0.0px;top:445.8px;width:900px;height:1px;background:#b4b4b4"></div>
<div class="a" style="left:0.0px;top:456.8px;width:900px;height:1px;background:#b4b4b4"></div>
<div class="a" style="left:40.1px;top:13.8px;width:1px;height:440px;background:#c4c4c4"></div>
<div class="a" style="left:78.2px;top:13.8px;width:1px;height:440px;background:#c4c4c4"></div>
<div class="a" style="left:110.9px;top:13.8px;width:1px;height:440px;background:#c4c4c4"></div>
<div class="a" style="left:160.3px;top:13.8px;width:1px;height:440px;background:#c4c4c4"></div>
<div class="a" style="left:344.5px;top:13.8px;width:1px;height:440px;background:#c4c4c4"></div>
<div class="a" style="left:528.7px;top:13.8px;width:1px;height:440px;background:#c4c4c4"></div>
<div class="a" style="left:577.4px;top:13.8px;width:1px;height:440px;background:#c4c4c4"></div>
<div class="a" style="left:624.2px;top:13.8px;width:1px;height:440px;background:#c4c4c4"></div>
<div class="a" style="left:676.3px;top:13.8px;width:1px;height:440px;background:#c4c4c4"></div>
<div class="a" style="left:744.7px;top:13.8px;width:1px;height:440px;background:#c4c4c4"></div>
<div class="t" style="left:5.69px;top:3.67px;font-size:7px;color:#f4f4f4;font-weight:bold;transform:scaleX(0.8340);transform-origin:0 0;;-webkit-text-stroke:0.1px #f4f4f4;">Inv Date</div>
<svg class="a" style="left:29.91px;top:3.8px;" width="5" height="7" viewBox="0 0 5 7"><ellipse cx="2.5" cy="2" rx="1.6" ry="1.5" fill="none" stroke="#ececec" stroke-width="0.9"/><ellipse cx="2.5" cy="5" rx="1.6" ry="1.5" fill="none" stroke="#ececec" stroke-width="0.9"/></svg>
<div class="t" style="left:44.84px;top:3.67px;font-size:7px;color:#f4f4f4;font-weight:bold;transform:scaleX(0.8340);transform-origin:0 0;;-webkit-text-stroke:0.1px #f4f4f4;">Inv Num</div>
<svg class="a" style="left:69.36px;top:3.8px;" width="5" height="7" viewBox="0 0 5 7"><ellipse cx="2.5" cy="2" rx="1.6" ry="1.5" fill="none" stroke="#ececec" stroke-width="0.9"/><ellipse cx="2.5" cy="5" rx="1.6" ry="1.5" fill="none" stroke="#ececec" stroke-width="0.9"/></svg>
<div class="t" style="left:81.53px;top:3.67px;font-size:7px;color:#f4f4f4;font-weight:bold;transform:scaleX(0.8340);transform-origin:0 0;;-webkit-text-stroke:0.1px #f4f4f4;">Cust ID</div>
<svg class="a" style="left:103.47px;top:3.8px;" width="5" height="7" viewBox="0 0 5 7"><ellipse cx="2.5" cy="2" rx="1.6" ry="1.5" fill="none" stroke="#ececec" stroke-width="0.9"/><ellipse cx="2.5" cy="5" rx="1.6" ry="1.5" fill="none" stroke="#ececec" stroke-width="0.9"/></svg>
<div class="t" style="left:123.77px;top:3.67px;font-size:7px;color:#f4f4f4;font-weight:bold;transform:scaleX(0.8340);transform-origin:0 0;;-webkit-text-stroke:0.1px #f4f4f4;">Site ID</div>
<svg class="a" style="left:143.43px;top:3.8px;" width="5" height="7" viewBox="0 0 5 7"><ellipse cx="2.5" cy="2" rx="1.6" ry="1.5" fill="none" stroke="#ececec" stroke-width="0.9"/><ellipse cx="2.5" cy="5" rx="1.6" ry="1.5" fill="none" stroke="#ececec" stroke-width="0.9"/></svg>
<div class="t" style="left:236.51px;top:3.67px;font-size:7px;color:#f4f4f4;font-weight:bold;transform:scaleX(0.8340);transform-origin:0 0;;-webkit-text-stroke:0.1px #f4f4f4;">Site Desc</div>
<svg class="a" style="left:264.29px;top:3.8px;" width="5" height="7" viewBox="0 0 5 7"><ellipse cx="2.5" cy="2" rx="1.6" ry="1.5" fill="none" stroke="#ececec" stroke-width="0.9"/><ellipse cx="2.5" cy="5" rx="1.6" ry="1.5" fill="none" stroke="#ececec" stroke-width="0.9"/></svg>
<div class="t" style="left:411.52px;top:3.67px;font-size:7px;color:#f4f4f4;font-weight:bold;transform:scaleX(0.8340);transform-origin:0 0;;-webkit-text-stroke:0.1px #f4f4f4;">Site Tax Exempt</div>
<svg class="a" style="left:457.68px;top:3.8px;" width="5" height="7" viewBox="0 0 5 7"><ellipse cx="2.5" cy="2" rx="1.6" ry="1.5" fill="none" stroke="#ececec" stroke-width="0.9"/><ellipse cx="2.5" cy="5" rx="1.6" ry="1.5" fill="none" stroke="#ececec" stroke-width="0.9"/></svg>
<div class="t" style="left:534.03px;top:3.67px;font-size:7px;color:#f4f4f4;font-weight:bold;transform:scaleX(0.8340);transform-origin:0 0;;-webkit-text-stroke:0.1px #f4f4f4;">Inv Tax Amt</div>
<svg class="a" style="left:567.97px;top:3.8px;" width="5" height="7" viewBox="0 0 5 7"><ellipse cx="2.5" cy="2" rx="1.6" ry="1.5" fill="none" stroke="#ececec" stroke-width="0.9"/><ellipse cx="2.5" cy="5" rx="1.6" ry="1.5" fill="none" stroke="#ececec" stroke-width="0.9"/></svg>
<div class="t" style="left:582.53px;top:3.67px;font-size:7px;color:#f4f4f4;font-weight:bold;transform:scaleX(0.8340);transform-origin:0 0;;-webkit-text-stroke:0.1px #f4f4f4;">Order Total</div>
<svg class="a" style="left:615.07px;top:3.8px;" width="5" height="7" viewBox="0 0 5 7"><ellipse cx="2.5" cy="2" rx="1.6" ry="1.5" fill="none" stroke="#ececec" stroke-width="0.9"/><ellipse cx="2.5" cy="5" rx="1.6" ry="1.5" fill="none" stroke="#ececec" stroke-width="0.9"/></svg>
<div class="t" style="left:629.50px;top:3.67px;font-size:7px;color:#f4f4f4;font-weight:bold;transform:scaleX(0.8340);transform-origin:0 0;;-webkit-text-stroke:0.1px #f4f4f4;">Inv Tax Code</div>
<svg class="a" style="left:666.9px;top:3.8px;" width="5" height="7" viewBox="0 0 5 7"><ellipse cx="2.5" cy="2" rx="1.6" ry="1.5" fill="none" stroke="#ececec" stroke-width="0.9"/><ellipse cx="2.5" cy="5" rx="1.6" ry="1.5" fill="none" stroke="#ececec" stroke-width="0.9"/></svg>
<div class="t" style="left:683.53px;top:3.67px;font-size:7px;color:#f4f4f4;font-weight:bold;transform:scaleX(0.8340);transform-origin:0 0;;-webkit-text-stroke:0.1px #f4f4f4;">Ship To Tax Code</div>
<svg class="a" style="left:733.47px;top:3.8px;" width="5" height="7" viewBox="0 0 5 7"><ellipse cx="2.5" cy="2" rx="1.6" ry="1.5" fill="none" stroke="#ececec" stroke-width="0.9"/><ellipse cx="2.5" cy="5" rx="1.6" ry="1.5" fill="none" stroke="#ececec" stroke-width="0.9"/></svg>
<div class="t" style="left:763.17px;top:3.67px;font-size:7px;color:#f4f4f4;font-weight:bold;transform:scaleX(0.8340);transform-origin:0 0;;-webkit-text-stroke:0.1px #f4f4f4;">Ship To</div>
<svg class="a" style="left:785.63px;top:3.8px;" width="5" height="7" viewBox="0 0 5 7"><ellipse cx="2.5" cy="2" rx="1.6" ry="1.5" fill="none" stroke="#ececec" stroke-width="0.9"/><ellipse cx="2.5" cy="5" rx="1.6" ry="1.5" fill="none" stroke="#ececec" stroke-width="0.9"/></svg>
</div>
<div class="a" style="left:516.3px;top:215px;width:452.70000000000005px;height:333.5px;box-shadow:0 6px 18px rgba(0,0,0,0.3), 0 0 5px rgba(0,0,0,0.18);border-radius:5px"></div>
<div class="a" style="left:516.3px;top:212px;width:452.70000000000005px;height:336.5px;background:#c9c9c9;border:1px solid #b8b8b8;border-radius:5px"></div>
<div class="a" style="left:516.3px;top:212px;width:452.70000000000005px;height:23.6px;background:#f2f2f2;border-radius:5px 5px 0 0"></div>
<div class="a" style="left:523px;top:216.7px;width:11.7px;height:11.6px;background:#111"></div>
<div class="t" style="left:523.90px;top:216.81px;font-size:7.2px;color:#f2e31b;font-weight:bold;transform:scaleX(0.8889);transform-origin:0 0;">NG</div>
<div class="t" style="left:524.00px;top:223.16px;font-size:5.6px;color:#2fc09a;font-weight:bold;transform:scaleX(1.0274);transform-origin:0 0;">365</div>
<div class="t" style="left:538.30px;top:218.98px;font-size:9px;color:#a2a2a2;transform:scaleX(0.9282);transform-origin:0 0;;-webkit-text-stroke:0.1px #a2a2a2;">Customer Invoice</div>
<div class="a" style="left:885px;top:222.3px;width:8px;height:1px;background:#9a9a9a"></div>
<div class="a" style="left:917px;top:219.7px;width:6.7px;height:6.3px;border:1px solid #d2d2d2"></div>
<svg class="a" style="left:949px;top:219px;" width="8" height="8" viewBox="0 0 8 8"><path d="M0.5 0.5L7.5 7.5M7.5 0.5L0.5 7.5" stroke="#8a8a8a" stroke-width="0.9"/></svg>
<div class="a" style="left:517.0px;top:235.6px;width:451.30000000000007px;height:17.4px;background:#989898"></div>
<div class="a" style="left:517.0px;top:235.6px;width:288.00000000000006px;height:17.4px;background:#575757"></div>
<div class="a" style="left:550.6px;top:236px;width:1px;height:17px;background:#727272"></div>
<div class="a" style="left:604px;top:236px;width:1px;height:17px;background:#727272"></div>
<div class="a" style="left:649px;top:236px;width:1px;height:17px;background:#727272"></div>
<div class="a" style="left:696px;top:236px;width:1px;height:17px;background:#727272"></div>
<div class="a" style="left:744.3px;top:236px;width:1px;height:17px;background:#727272"></div>
<svg class="a" style="left:519.5px;top:239px;" width="13" height="13" viewBox="0 0 13 13"><circle cx="6.5" cy="6.5" r="6.3" fill="#2db59f"/><path d="M3.2 6.7L5.6 9L9.8 4.3" stroke="#fff" stroke-width="1.4" fill="none"/></svg>
<div class="t" style="left:534.00px;top:240.92px;font-size:8.6px;color:#e9e9e9;transform:scaleX(0.9100);transform-origin:0 0;;-webkit-text-stroke:0.15px #e9e9e9;">Ok</div>
<svg class="a" style="left:554.5px;top:238px;" width="13" height="13" viewBox="0 0 13 13"><path d="M1 1L10 11M10 1L1 11" stroke="#e23b2e" stroke-width="1.5"/><path d="M8 9.5H12M10.5 8L12 9.5L10.5 11" stroke="#2aa84a" stroke-width="1.1" fill="none"/></svg>
<div class="t" style="left:569.40px;top:240.92px;font-size:8.6px;color:#e9e9e9;transform:scaleX(0.8816);transform-origin:0 0;;-webkit-text-stroke:0.15px #e9e9e9;">Cancel</div>
<svg class="a" style="left:607.5px;top:238px;" width="13" height="13" viewBox="0 0 13 13"><path d="M0.5 0.5H10L12.5 3V12.5H0.5Z" fill="#e6e6e6" stroke="#c8c8c8" stroke-width="0.8"/><rect x="3" y="0.8" width="6" height="4" fill="#9a9a9a"/><rect x="2.5" y="7.5" width="8" height="5" fill="#fff"/></svg>
<div class="t" style="left:624.00px;top:240.92px;font-size:8.6px;color:#e9e9e9;transform:scaleX(0.8162);transform-origin:0 0;;-webkit-text-stroke:0.15px #e9e9e9;">Save</div>
<svg class="a" style="left:653.8px;top:240px;" width="11.5" height="11.5" viewBox="0 0 11.5 11.5"><circle cx="5.75" cy="5.75" r="5.6" fill="#33a844"/><path d="M5.75 2.8V8.7M2.8 5.75H8.7" stroke="#fff" stroke-width="1.3"/></svg>
<div class="t" style="left:669.40px;top:240.92px;font-size:8.6px;color:#e9e9e9;transform:scaleX(0.9300);transform-origin:0 0;;-webkit-text-stroke:0.15px #e9e9e9;">New</div>
<svg class="a" style="left:699px;top:239.5px;" width="10" height="10" viewBox="0 0 10 10"><circle cx="5" cy="5" r="4.8" fill="#444"/><path d="M3.2 3.2L6.8 6.8M6.8 3.2L3.2 6.8" stroke="#ddd" stroke-width="1"/></svg>
<div class="t" style="left:712.50px;top:241.22px;font-size:8.6px;color:#e9e9e9;transform:scaleX(0.9654);transform-origin:0 0;;-webkit-text-stroke:0.15px #e9e9e9;">Delete</div>
<svg class="a" style="left:746.5px;top:238.5px;" width="13" height="13" viewBox="0 0 13 13"><rect x="0.5" y="2.5" width="8" height="10" fill="#fff" stroke="#d03030" stroke-width="1"/><rect x="4" y="0.5" width="8" height="10" fill="#fff" stroke="#d03030" stroke-width="1"/><path d="M5.5 3H10" stroke="#d03030" stroke-width="0.8"/></svg>
<div class="t" style="left:759.30px;top:240.92px;font-size:8.6px;color:#e9e9e9;transform:scaleX(0.9440);transform-origin:0 0;;-webkit-text-stroke:0.15px #e9e9e9;">Copy/Split</div>
<div class="t" style="left:845.00px;top:239.45px;font-size:8.8px;color:#3ced3c;font-weight:bold;transform:scaleX(0.8655);transform-origin:0 0;">Look for:</div>
<div class="a" style="left:882px;top:239px;width:77px;height:11.5px;background:#ffffff;border:1px solid #9c9c9c;border-color:#7a7a7a"></div>
<div class="a" style="left:946px;top:239.5px;width:12.5px;height:10.5px;background:#fff;border-left:1px solid #cfcfcf"></div>
<svg class="a" style="left:949.2px;top:243.55px;" width="6" height="4" viewBox="0 0 6 4"><path d="M0.5 0.6L3 3.2L5.5 0.6" stroke="#6a6a6a" stroke-width="0.8" fill="none"/></svg>
<div class="a" style="left:517.0px;top:253px;width:451.30000000000007px;height:250px;background:#4d4d4d"></div>
<div class="a" style="left:517.0px;top:253px;width:451.30000000000007px;height:1px;background:#3a3a3a"></div>
<div class="t" style="left:518.70px;top:260.80px;font-size:8.5px;color:#e2e2e2;transform:scaleX(0.9483);transform-origin:0 0;-webkit-text-stroke:0.2px #e2e2e2">Invoice #:</div>
<div class="a" style="left:558px;top:259.8px;width:66.70000000000005px;height:11.0px;background:#fff;border:1px solid #b0b0b0;"></div>
<div class="t" style="left:559.50px;top:260.70px;font-size:8.5px;color:#111;transform:scaleX(0.8702);transform-origin:0 0;;-webkit-text-stroke:0.15px #111;">I-431040</div>
<div class="t" style="left:628.80px;top:260.80px;font-size:8.5px;color:#e2e2e2;transform:scaleX(0.9071);transform-origin:0 0;-webkit-text-stroke:0.2px #e2e2e2">Invoice Date:</div>
<div class="a" style="left:674.2px;top:268.4px;width:1.8px;height:1.8px;background:#d42020;border-radius:50%"></div>
<div class="a" style="left:678.7px;top:259.8px;width:55.59999999999991px;height:11.0px;background:#fff;border:1px solid #b0b0b0;"></div>
<div class="t" style="left:687.00px;top:260.70px;font-size:8.5px;color:#111;transform:scaleX(0.9026);transform-origin:0 0;;-webkit-text-stroke:0.15px #111;">12/29/2009</div>
<div class="t" style="left:749.90px;top:260.80px;font-size:8.5px;color:#e2e2e2;transform:scaleX(0.8936);transform-origin:0 0;-webkit-text-stroke:0.2px #e2e2e2">Due Date:</div>
<div class="a" style="left:783.8000000000001px;top:268.4px;width:1.8px;height:1.8px;background:#d42020;border-radius:50%"></div>
<div class="a" style="left:789px;top:259.6px;width:55.299999999999955px;height:11.199999999999989px;background:#fff;border:1px solid #b0b0b0;"></div>
<div class="t" style="left:798.00px;top:260.70px;font-size:8.5px;color:#111;transform:scaleX(0.9520);transform-origin:0 0;;-webkit-text-stroke:0.15px #111;">1/28/2010</div>
<div class="t" style="left:871.40px;top:260.80px;font-size:8.5px;color:#e2e2e2;transform:scaleX(0.9235);transform-origin:0 0;-webkit-text-stroke:0.2px #e2e2e2">Type:</div>
<div class="a" style="left:893.3px;top:259.6px;width:70.0px;height:11.199999999999989px;background:#ffffff;border:1px solid #9c9c9c;"></div>
<div class="a" style="left:951.8px;top:260.1px;width:11.0px;height:10.199999999999989px;background:#fff;border-left:1px solid #cfcfcf"></div>
<svg class="a" style="left:954.25px;top:264.0px;" width="6" height="4" viewBox="0 0 6 4"><path d="M0.5 0.6L3 3.2L5.5 0.6" stroke="#6a6a6a" stroke-width="0.8" fill="none"/></svg>
<div class="t" style="left:894.80px;top:260.70px;font-size:8.5px;color:#111;transform:scaleX(0.9299);transform-origin:0 0;;-webkit-text-stroke:0.15px #111;">INVOICE</div>
<div class="t" style="left:518.70px;top:274.70px;font-size:8.5px;color:#e2e2e2;transform:scaleX(0.9182);transform-origin:0 0;-webkit-text-stroke:0.2px #e2e2e2">Customer:</div>
<div class="a" style="left:554.1px;top:282.5px;width:1.8px;height:1.8px;background:#d42020;border-radius:50%"></div>
<div class="a" style="left:558px;top:274.2px;width:66.70000000000005px;height:11.400000000000034px;background:#ffffff;border:1px solid #9c9c9c;"></div>
<div class="a" style="left:613.2px;top:274.7px;width:11.0px;height:10.400000000000034px;background:#fff;border-left:1px solid #cfcfcf"></div>
<svg class="a" style="left:615.65px;top:278.7px;" width="6" height="4" viewBox="0 0 6 4"><path d="M0.5 0.6L3 3.2L5.5 0.6" stroke="#6a6a6a" stroke-width="0.8" fill="none"/></svg>
<div class="t" style="left:559.50px;top:275.10px;font-size:8.5px;color:#1a5fd0;transform:scaleX(0.8461);transform-origin:0 0;text-decoration:underline;-webkit-text-stroke:0.15px #1a5fd0;">179</div>
<div class="t" style="left:631.90px;top:274.30px;font-size:8.5px;color:#2bd02b;transform:scaleX(0.8632);transform-origin:0 0;;-webkit-text-stroke:0.15px #2bd02b;">A. C. O. LAB</div>
<div class="a" style="left:865.3px;top:274.8px;width:16.5px;height:12.8px;border:1px solid #8a8a8a"></div>
<svg class="a" style="left:867.8px;top:275.7px;" width="11" height="11" viewBox="0 0 11 11"><circle cx="5.5" cy="5.5" r="5.2" fill="#33a844"/><path d="M5.5 2.8V8.2M2.8 5.5H8.2" stroke="#fff" stroke-width="1.2"/></svg>
<div class="a" style="left:882px;top:273.4px;width:82px;height:14.2px;border:1px solid #9a9a9a"></div>
<div class="t" style="left:885.40px;top:276.30px;font-size:8.5px;color:#e2e2e2;transform:scaleX(0.8468);transform-origin:0 0;-webkit-text-stroke:0.2px #e2e2e2">By</div>
<svg class="a" style="left:902.3px;top:276.3px;" width="7.4" height="7.4" viewBox="0 0 7.4 7.4"><circle cx="3.7" cy="3.7" r="3.5" fill="#1f6fd0"/><circle cx="3.7" cy="3.7" r="1.3" fill="#fff"/></svg>
<div class="t" style="left:913.40px;top:276.30px;font-size:8.5px;color:#e2e2e2;transform:scaleX(0.9294);transform-origin:0 0;-webkit-text-stroke:0.2px #e2e2e2">ID</div>
<svg class="a" style="left:927.3px;top:276.3px;" width="7.4" height="7.4" viewBox="0 0 7.4 7.4"><circle cx="3.7" cy="3.7" r="3.5" fill="#f4f4f4"/></svg>
<div class="t" style="left:936.00px;top:276.30px;font-size:8.5px;color:#e2e2e2;transform:scaleX(0.8953);transform-origin:0 0;-webkit-text-stroke:0.2px #e2e2e2">Name</div>
<div class="a" style="left:518px;top:290.8px;width:446px;height:16px;background:#4d4d4d;border:1px solid #b5b5b5"></div>
<div class="a" style="left:519.2px;top:292.4px;width:45.09999999999991px;height:13.2px;background:#3c6fc4;border:1px solid #6a8fd0"></div>
<div class="a" style="left:564.9px;top:292.4px;width:39.39999999999998px;height:13.2px;background:#535353;border:1px solid #6e6e6e"></div>
<div class="a" style="left:605px;top:292.4px;width:49px;height:13.2px;background:#535353;border:1px solid #6e6e6e"></div>
<div class="a" style="left:654.7px;top:292.4px;width:63.89999999999998px;height:13.2px;background:#535353;border:1px solid #6e6e6e"></div>
<div class="a" style="left:719.4px;top:292.4px;width:60.200000000000045px;height:13.2px;background:#535353;border:1px solid #6e6e6e"></div>
<div class="a" style="left:780.2px;top:292.4px;width:46.19999999999993px;height:13.2px;background:#535353;border:1px solid #6e6e6e"></div>
<div class="a" style="left:827px;top:292.4px;width:66.29999999999995px;height:13.2px;background:#535353;border:1px solid #6e6e6e"></div>
<div class="t" style="left:535.50px;top:295.40px;font-size:8.5px;color:#2ae02a;transform:scaleX(1.0043);transform-origin:0 0;;-webkit-text-stroke:0.15px #2ae02a;">Header</div>
<svg class="a" style="left:522px;top:293.5px;" width="12.5" height="11" viewBox="0 0 12.5 11"><rect x="0.5" y="0.5" width="11.5" height="10" fill="#2fb59a"/><rect x="2" y="6" width="8.5" height="4" fill="#e8f8f4"/><rect x="2.5" y="1.5" width="5" height="3" fill="#9de0d0"/></svg>
<svg class="a" style="left:567.5px;top:293px;" width="10" height="12" viewBox="0 0 10 12"><rect x="0.5" y="0.5" width="9" height="11" fill="#1e8ee8"/><path d="M2 3H8M2 5H8M2 7H8M2 9H8" stroke="#fff" stroke-width="0.8"/></svg>
<div class="t" style="left:578.70px;top:295.40px;font-size:8.5px;color:#e2e2e2;transform:scaleX(0.9596);transform-origin:0 0;;-webkit-text-stroke:0.15px #e2e2e2;">Lines</div>
<svg class="a" style="left:610px;top:293px;" width="8" height="12" viewBox="0 0 8 12"><path d="M4 0.5A3.3 3.3 0 0 1 7.3 3.8C7.3 6 4 9.5 4 9.5C4 9.5 0.7 6 0.7 3.8A3.3 3.3 0 0 1 4 0.5Z" fill="#ef5a1e"/><circle cx="4" cy="3.8" r="1.3" fill="#fff"/><rect x="0" y="9.5" width="8" height="2.5" fill="#3a9a3a"/></svg>
<div class="t" style="left:622.00px;top:295.40px;font-size:8.5px;color:#e2e2e2;transform:scaleX(0.9460);transform-origin:0 0;;-webkit-text-stroke:0.15px #e2e2e2;">Address</div>
<svg class="a" style="left:658px;top:293px;" width="12" height="12" viewBox="0 0 12 12"><rect x="0.5" y="1" width="9" height="10.5" fill="#f0f0f0" stroke="#888" stroke-width="0.6"/><path d="M2 4H8M2 6H8M2 8H7" stroke="#999" stroke-width="0.6"/><path d="M11.5 0.5L5 8.5L4.3 10.3L6 9.5L12 1.5Z" fill="#f0a020"/></svg>
<div class="t" style="left:672.00px;top:295.40px;font-size:8.5px;color:#e2e2e2;transform:scaleX(0.9408);transform-origin:0 0;;-webkit-text-stroke:0.15px #e2e2e2;">Notes / Doc.</div>
<svg class="a" style="left:721px;top:293px;" width="12" height="12" viewBox="0 0 12 12"><rect x="0.5" y="1" width="11" height="10.5" fill="#d8cfa0"/><path d="M0.5 5L11.5 8" stroke="#7ab0e0" stroke-width="2"/><circle cx="7" cy="4" r="2.8" fill="#e03030"/><circle cx="7" cy="4" r="1" fill="#fff"/></svg>
<div class="t" style="left:734.60px;top:295.40px;font-size:8.5px;color:#e2e2e2;transform:scaleX(0.9622);transform-origin:0 0;;-webkit-text-stroke:0.15px #e2e2e2;">Ship from</div>
<svg class="a" style="left:782px;top:293px;" width="12" height="12" viewBox="0 0 12 12"><rect x="0" y="0" width="12" height="12" fill="#1878d8"/><circle cx="6" cy="6" r="4.6" fill="none" stroke="#fff" stroke-width="1.1"/><path d="M6 3.2V6.2H8.2" stroke="#fff" stroke-width="1" fill="none"/></svg>
<div class="t" style="left:795.00px;top:295.40px;font-size:8.5px;color:#e2e2e2;transform:scaleX(1.0020);transform-origin:0 0;;-webkit-text-stroke:0.15px #e2e2e2;">History</div>
<svg class="a" style="left:831px;top:295px;" width="11" height="8" viewBox="0 0 11 8"><rect x="0.5" y="1.5" width="10" height="6.5" fill="#e69a2a"/><rect x="2" y="0" width="9" height="6" fill="#5aa0e0"/></svg>
<div class="t" style="left:842.50px;top:295.40px;font-size:8.5px;color:#e2e2e2;transform:scaleX(0.8731);transform-origin:0 0;;-webkit-text-stroke:0.15px #e2e2e2;">Payments</div>
<div class="a" style="left:518px;top:311px;width:449.5px;height:156px;border:1px solid #bdbdbd;border-right:none"></div>
<div class="t" style="left:524.00px;top:322.20px;font-size:8.5px;color:#30e030;transform:scaleX(0.8957);transform-origin:0 0;-webkit-text-stroke:0.2px #30e030">Currency:</div>
<div class="a" style="left:561.1px;top:328.9px;width:1.8px;height:1.8px;background:#d42020;border-radius:50%"></div>
<div class="a" style="left:566px;top:321.3px;width:50.299999999999955px;height:10.599999999999966px;background:#ffffff;border:1px solid #9c9c9c;"></div>
<div class="a" style="left:605.0px;top:321.8px;width:10.8px;height:9.599999999999966px;background:#fff;border-left:1px solid #cfcfcf"></div>
<svg class="a" style="left:607.35px;top:325.4px;" width="6" height="4" viewBox="0 0 6 4"><path d="M0.5 0.6L3 3.2L5.5 0.6" stroke="#6a6a6a" stroke-width="0.8" fill="none"/></svg>
<div class="t" style="left:567.50px;top:322.20px;font-size:8.5px;color:#111;transform:scaleX(0.8637);transform-origin:0 0;;-webkit-text-stroke:0.15px #111;">USD</div>
<div class="a" style="left:618.7px;top:321.3px;width:24.0px;height:10.599999999999966px;background:#fff;border:1px solid #b0b0b0;"></div>
<div class="t" style="left:623.00px;top:322.20px;font-size:8.5px;color:#333;font-style:italic;transform:scaleX(0.8462);transform-origin:0 0;">1.000</div>
<div class="t" style="left:662.40px;top:322.20px;font-size:8.5px;color:#e2e2e2;transform:scaleX(0.8686);transform-origin:0 0;-webkit-text-stroke:0.2px #e2e2e2">Pay Term:</div>
<div class="a" style="left:697.1px;top:329.2px;width:1.8px;height:1.8px;background:#d42020;border-radius:50%"></div>
<div class="a" style="left:701.4px;top:320.9px;width:75.60000000000002px;height:11.100000000000023px;background:#ffffff;border:1px solid #9c9c9c;"></div>
<div class="a" style="left:765.5px;top:321.4px;width:11.0px;height:10.100000000000023px;background:#fff;border-left:1px solid #cfcfcf"></div>
<svg class="a" style="left:767.95px;top:325.25px;" width="6" height="4" viewBox="0 0 6 4"><path d="M0.5 0.6L3 3.2L5.5 0.6" stroke="#6a6a6a" stroke-width="0.8" fill="none"/></svg>
<div class="t" style="left:702.80px;top:322.20px;font-size:8.5px;color:#111;;-webkit-text-stroke:0.15px #111;">1</div>
<div class="t" style="left:781.80px;top:321.80px;font-size:8.5px;color:#e2e2e2;transform:scaleX(0.9414);transform-origin:0 0;-webkit-text-stroke:0.2px #e2e2e2">Ship Term:</div>
<div class="a" style="left:830.2px;top:329.0px;width:1.8px;height:1.8px;background:#d42020;border-radius:50%"></div>
<div class="a" style="left:835px;top:320.9px;width:65.29999999999995px;height:11.100000000000023px;background:#ffffff;border:1px solid #9c9c9c;"></div>
<div class="a" style="left:888.8px;top:321.4px;width:11.0px;height:10.100000000000023px;background:#fff;border-left:1px solid #cfcfcf"></div>
<svg class="a" style="left:891.25px;top:325.25px;" width="6" height="4" viewBox="0 0 6 4"><path d="M0.5 0.6L3 3.2L5.5 0.6" stroke="#6a6a6a" stroke-width="0.8" fill="none"/></svg>
<div class="t" style="left:836.50px;top:322.20px;font-size:8.5px;color:#111;;-webkit-text-stroke:0.15px #111;">1</div>
<div class="t" style="left:906.70px;top:321.80px;font-size:8.5px;color:#e2e2e2;transform:scaleX(0.9124);transform-origin:0 0;-webkit-text-stroke:0.2px #e2e2e2">Posted:</div>
<div class="a" style="left:936.7px;top:320.6px;width:25.9px;height:12.9px;background:#535353"></div>
<div class="t" style="left:943.00px;top:322.24px;font-size:9.4px;color:#e8142c;font-weight:bold;transform:scaleX(0.8514);transform-origin:0 0;;-webkit-text-stroke:0.15px #e8142c;">Yes</div>
<div class="t" style="left:524.50px;top:339.00px;font-size:8.5px;color:#e2e2e2;transform:scaleX(0.9157);transform-origin:0 0;-webkit-text-stroke:0.2px #e2e2e2">PO #:</div>
<div class="a" style="left:547.7px;top:346.9px;width:1.8px;height:1.8px;background:#d42020;border-radius:50%"></div>
<div class="a" style="left:552.8px;top:338.6px;width:90.40000000000009px;height:11.199999999999989px;background:#fff;border:1px solid #b0b0b0;"></div>
<div class="t" style="left:652.30px;top:339.00px;font-size:8.5px;color:#e2e2e2;transform:scaleX(0.9042);transform-origin:0 0;-webkit-text-stroke:0.2px #e2e2e2">Site ID:</div>
<div class="a" style="left:682.3px;top:338.6px;width:94.70000000000005px;height:11.199999999999989px;background:#ffffff;border:1px solid #9c9c9c;"></div>
<div class="a" style="left:765.5px;top:339.1px;width:11.0px;height:10.199999999999989px;background:#fff;border-left:1px solid #cfcfcf"></div>
<svg class="a" style="left:767.95px;top:343.0px;" width="6" height="4" viewBox="0 0 6 4"><path d="M0.5 0.6L3 3.2L5.5 0.6" stroke="#6a6a6a" stroke-width="0.8" fill="none"/></svg>
<div class="t" style="left:683.50px;top:339.60px;font-size:8.5px;color:#1a5fd0;transform:scaleX(0.9237);transform-origin:0 0;text-decoration:underline;-webkit-text-stroke:0.15px #1a5fd0;">179</div>
<div class="t" style="left:782.00px;top:338.60px;font-size:8.5px;color:#e2e2e2;transform:scaleX(0.9236);transform-origin:0 0;-webkit-text-stroke:0.2px #e2e2e2">AR Account:</div>
<div class="a" style="left:830.2px;top:346.2px;width:1.8px;height:1.8px;background:#d42020;border-radius:50%"></div>
<div class="a" style="left:833.5px;top:338.6px;width:67.20000000000005px;height:11.199999999999989px;background:#ffffff;border:1px solid #9c9c9c;"></div>
<div class="a" style="left:889.2px;top:339.1px;width:11.0px;height:10.199999999999989px;background:#fff;border-left:1px solid #cfcfcf"></div>
<svg class="a" style="left:891.65px;top:343.0px;" width="6" height="4" viewBox="0 0 6 4"><path d="M0.5 0.6L3 3.2L5.5 0.6" stroke="#6a6a6a" stroke-width="0.8" fill="none"/></svg>
<div class="t" style="left:835.00px;top:339.60px;font-size:8.5px;color:#111;transform:scaleX(0.8217);transform-origin:0 0;;-webkit-text-stroke:0.15px #111;">1210-000-000</div>
<div class="t" style="left:907.00px;top:338.60px;font-size:8.5px;color:#e2e2e2;transform:scaleX(0.8878);transform-origin:0 0;-webkit-text-stroke:0.2px #e2e2e2">Paid:</div>
<div class="a" style="left:936.7px;top:338px;width:25.9px;height:12.9px;background:#535353"></div>
<div class="t" style="left:943.00px;top:339.74px;font-size:9.4px;color:#e8142c;font-weight:bold;transform:scaleX(0.8514);transform-origin:0 0;;-webkit-text-stroke:0.15px #e8142c;">Yes</div>
<div class="t" style="left:522.80px;top:356.50px;font-size:8.5px;color:#30e030;font-style:italic;transform:scaleX(0.8571);transform-origin:0 0;-webkit-text-stroke:0.2px #30e030">Freight:</div>
<div class="a" style="left:566px;top:356px;width:58px;height:10.899999999999977px;background:#fff;border:1px solid #b0b0b0;"></div>
<div class="t" style="left:608.50px;top:357.10px;font-size:8.5px;color:#333;font-style:italic;transform:scaleX(0.8765);transform-origin:0 0;">0.00</div>
<div class="t" style="left:631.90px;top:356.50px;font-size:8.5px;color:#e2e2e2;transform:scaleX(0.9491);transform-origin:0 0;-webkit-text-stroke:0.2px #e2e2e2">Freight Tax:</div>
<div class="a" style="left:679.4px;top:356px;width:32.80000000000007px;height:10.899999999999977px;background:#ffffff;border:1px solid #9c9c9c;"></div>
<div class="a" style="left:701.7px;top:356.5px;width:10.0px;height:9.899999999999977px;background:#fff;border-left:1px solid #cfcfcf"></div>
<svg class="a" style="left:703.65px;top:360.25px;" width="6" height="4" viewBox="0 0 6 4"><path d="M0.5 0.6L3 3.2L5.5 0.6" stroke="#6a6a6a" stroke-width="0.8" fill="none"/></svg>
<div class="t" style="left:681.00px;top:357.10px;font-size:8.5px;color:#111;;-webkit-text-stroke:0.15px #111;">0</div>
<div class="t" style="left:718.70px;top:356.50px;font-size:8.5px;color:#30e030;font-style:italic;transform:scaleX(0.8933);transform-origin:0 0;-webkit-text-stroke:0.2px #30e030">Other:</div>
<div class="a" style="left:746.8px;top:356px;width:58.80000000000007px;height:10.899999999999977px;background:#fff;border:1px solid #b0b0b0;"></div>
<div class="t" style="left:790.10px;top:357.10px;font-size:8.5px;color:#333;font-style:italic;transform:scaleX(0.8765);transform-origin:0 0;">0.00</div>
<div class="t" style="left:817.80px;top:356.50px;font-size:8.5px;color:#e2e2e2;transform:scaleX(0.9422);transform-origin:0 0;-webkit-text-stroke:0.2px #e2e2e2">Other Tax:</div>
<div class="a" style="left:862px;top:356px;width:35.299999999999955px;height:10.899999999999977px;background:#ffffff;border:1px solid #9c9c9c;"></div>
<div class="a" style="left:886.8px;top:356.5px;width:10.0px;height:9.899999999999977px;background:#fff;border-left:1px solid #cfcfcf"></div>
<svg class="a" style="left:888.75px;top:360.25px;" width="6" height="4" viewBox="0 0 6 4"><path d="M0.5 0.6L3 3.2L5.5 0.6" stroke="#6a6a6a" stroke-width="0.8" fill="none"/></svg>
<div class="t" style="left:863.50px;top:357.10px;font-size:8.5px;color:#111;;-webkit-text-stroke:0.15px #111;">0</div>
<div class="t" style="left:522.30px;top:374.20px;font-size:8.5px;color:#e2e2e2;transform:scaleX(0.9361);transform-origin:0 0;-webkit-text-stroke:0.2px #e2e2e2">Comment:</div>
<div class="a" style="left:566.4px;top:373.8px;width:393.70000000000005px;height:10.699999999999989px;background:#fff;border:1px solid #b0b0b0;"></div>
<div class="t" style="left:522.30px;top:391.50px;font-size:8.5px;color:#e2e2e2;transform:scaleX(0.8826);transform-origin:0 0;-webkit-text-stroke:0.2px #e2e2e2">Sales Employee:</div>
<div class="a" style="left:583.5px;top:390.7px;width:90.70000000000005px;height:11.300000000000011px;background:#ffffff;border:1px solid #9c9c9c;"></div>
<div class="a" style="left:662.7px;top:391.2px;width:11.0px;height:10.300000000000011px;background:#fff;border-left:1px solid #cfcfcf"></div>
<svg class="a" style="left:665.15px;top:395.15px;" width="6" height="4" viewBox="0 0 6 4"><path d="M0.5 0.6L3 3.2L5.5 0.6" stroke="#6a6a6a" stroke-width="0.8" fill="none"/></svg>
<div class="t" style="left:585.00px;top:391.80px;font-size:8.5px;color:#111;transform:scaleX(0.7448);transform-origin:0 0;;-webkit-text-stroke:0.15px #111;">LLEHMKUHL</div>
<div class="a" style="left:675.7px;top:390.5px;width:67.1px;height:12.5px;background:#4b4b4b;border:1px solid #8c8c8c"></div>
<svg class="a" style="left:678.5px;top:392px;" width="10" height="9.5" viewBox="0 0 10 9.5"><circle cx="2.2" cy="2.2" r="1.7" fill="none" stroke="#cfe0f5" stroke-width="1"/><circle cx="7.8" cy="7.3" r="1.7" fill="none" stroke="#cfe0f5" stroke-width="1"/><path d="M8.8 0.8L1.2 8.7" stroke="#cfe0f5" stroke-width="1.3"/></svg>
<div class="t" style="left:690.50px;top:391.90px;font-size:8.5px;color:#e2e2e2;transform:scaleX(0.9944);transform-origin:0 0;;-webkit-text-stroke:0.15px #e2e2e2;">Commission</div>
<div class="t" style="left:748.90px;top:391.50px;font-size:8.5px;color:#e2e2e2;transform:scaleX(0.8923);transform-origin:0 0;-webkit-text-stroke:0.2px #e2e2e2">Reference:</div>
<div class="a" style="left:790.4px;top:390.7px;width:86.30000000000007px;height:11.300000000000011px;background:#fff;border:1px solid #b0b0b0;"></div>
<div class="t" style="left:881.00px;top:391.50px;font-size:8.5px;color:#e2e2e2;transform:scaleX(0.9797);transform-origin:0 0;-webkit-text-stroke:0.2px #e2e2e2">Order:</div>
<div class="a" style="left:908.3px;top:390.7px;width:52.80000000000007px;height:11.300000000000011px;background:#fff;border:1px solid #b0b0b0;"></div>
<div class="t" style="left:909.80px;top:391.80px;font-size:8.5px;color:#1a5fd0;transform:scaleX(0.8269);transform-origin:0 0;text-decoration:underline;-webkit-text-stroke:0.15px #1a5fd0;">SO94179</div>
<div class="t" style="left:522.30px;top:409.00px;font-size:8.5px;color:#e2e2e2;transform:scaleX(0.9115);transform-origin:0 0;-webkit-text-stroke:0.2px #e2e2e2">Call ID:</div>
<div class="a" style="left:583.5px;top:408px;width:78.5px;height:11.600000000000023px;background:#fff;border:1px solid #b0b0b0;"></div>
<div class="t" style="left:669.30px;top:409.00px;font-size:8.5px;color:#e2e2e2;transform:scaleX(0.8923);transform-origin:0 0;-webkit-text-stroke:0.2px #e2e2e2">Call Date:</div>
<div class="a" style="left:707.5px;top:408px;width:55.89999999999998px;height:11.600000000000023px;background:#fff;border:1px solid #b0b0b0;"></div>
<div class="t" style="left:769.80px;top:409.00px;font-size:8.5px;color:#e2e2e2;transform:scaleX(0.9506);transform-origin:0 0;-webkit-text-stroke:0.2px #e2e2e2">Shipped:</div>
<div class="a" style="left:806px;top:408.7px;width:55.60000000000002px;height:10.800000000000011px;background:#fff;border:1px solid #b0b0b0;"></div>
<div class="t" style="left:807.50px;top:409.40px;font-size:8.5px;color:#111;transform:scaleX(0.9026);transform-origin:0 0;;-webkit-text-stroke:0.15px #111;">12/29/2009</div>
<div class="a" style="left:520.8px;top:431.5px;width:443px;height:26.2px;border:1px solid #c8c8c8"></div>
<div class="a" style="left:532.5px;top:427px;width:60px;height:8px;background:#4d4d4d"></div>
<div class="t" style="left:535.50px;top:427.40px;font-size:8.5px;color:#30e030;transform:scaleX(0.9438);transform-origin:0 0;;-webkit-text-stroke:0.15px #30e030;">Payment Info.</div>
<div class="t" style="left:528.00px;top:440.20px;font-size:8.5px;color:#e2e2e2;transform:scaleX(0.9318);transform-origin:0 0;-webkit-text-stroke:0.2px #e2e2e2">Prepaid:</div>
<div class="a" style="left:561.5px;top:439.6px;width:55.39999999999998px;height:11.0px;background:#fff;border:1px solid #b0b0b0;"></div>
<div class="t" style="left:623.70px;top:440.20px;font-size:8.5px;color:#30e030;font-style:italic;transform:scaleX(0.8413);transform-origin:0 0;-webkit-text-stroke:0.2px #30e030">Paid:</div>
<div class="a" style="left:648.7px;top:439.6px;width:55.89999999999998px;height:11.0px;background:#fff;border:1px solid #b0b0b0;"></div>
<div class="t" style="left:678.80px;top:440.60px;font-size:8.5px;color:#333;font-style:italic;transform:scaleX(0.9424);transform-origin:0 0;">373.00</div>
<div class="t" style="left:711.00px;top:440.20px;font-size:8.5px;color:#e2e2e2;transform:scaleX(0.9616);transform-origin:0 0;-webkit-text-stroke:0.2px #e2e2e2">Discount</div>
<div class="a" style="left:747.3px;top:440.3px;width:55.5px;height:10.300000000000011px;background:#fff;border:1px solid #b0b0b0;"></div>
<div class="t" style="left:787.30px;top:440.60px;font-size:8.5px;color:#222;transform:scaleX(0.8765);transform-origin:0 0;;-webkit-text-stroke:0.15px #222;">0.00</div>
<div class="a" style="left:518px;top:469.9px;width:449px;height:16.8px;border:1px solid #bdbdbd;border-right:none"></div>
<div class="t" style="left:520.80px;top:473.10px;font-size:8.5px;color:#30e030;transform:scaleX(0.9502);transform-origin:0 0;-webkit-text-stroke:0.2px #30e030">Taxes</div>
<div class="t" style="left:550.20px;top:473.10px;font-size:8.5px;color:#e2e2e2;transform:scaleX(0.9342);transform-origin:0 0;-webkit-text-stroke:0.2px #e2e2e2">Group 1:</div>
<div class="a" style="left:581.8000000000001px;top:480.8px;width:1.8px;height:1.8px;background:#d42020;border-radius:50%"></div>
<div class="a" style="left:586px;top:472.8px;width:98px;height:12.0px;background:#ffffff;border:1px solid #9c9c9c;"></div>
<div class="a" style="left:672.5px;top:473.3px;width:11.0px;height:11.0px;background:#fff;border-left:1px solid #cfcfcf"></div>
<svg class="a" style="left:674.95px;top:477.6px;" width="6" height="4" viewBox="0 0 6 4"><path d="M0.5 0.6L3 3.2L5.5 0.6" stroke="#6a6a6a" stroke-width="0.8" fill="none"/></svg>
<div class="t" style="left:587.50px;top:473.60px;font-size:8.5px;color:#1a5fd0;transform:scaleX(0.8631);transform-origin:0 0;text-decoration:underline;-webkit-text-stroke:0.15px #1a5fd0;">NO_TAXAR</div>
<div class="a" style="left:688.9px;top:472.8px;width:24.5px;height:12.0px;background:#fff;border:1px solid #b0b0b0;"></div>
<div class="t" style="left:697.90px;top:473.60px;font-size:8.5px;color:#333;font-style:italic;transform:scaleX(0.8765);transform-origin:0 0;">0.00</div>
<div class="t" style="left:715.70px;top:473.10px;font-size:8.5px;color:#e2e2e2;transform:scaleX(0.7277);transform-origin:0 0;-webkit-text-stroke:0.2px #e2e2e2">%</div>
<div class="t" style="left:729.00px;top:473.10px;font-size:8.5px;color:#e2e2e2;transform:scaleX(0.9373);transform-origin:0 0;-webkit-text-stroke:0.2px #e2e2e2">Group 2:</div>
<div class="a" style="left:760.8000000000001px;top:480.8px;width:1.8px;height:1.8px;background:#d42020;border-radius:50%"></div>
<div class="a" style="left:765px;top:472.8px;width:80.79999999999995px;height:12.0px;background:#ffffff;border:1px solid #9c9c9c;"></div>
<div class="a" style="left:834.3px;top:473.3px;width:11.0px;height:11.0px;background:#fff;border-left:1px solid #cfcfcf"></div>
<svg class="a" style="left:836.75px;top:477.6px;" width="6" height="4" viewBox="0 0 6 4"><path d="M0.5 0.6L3 3.2L5.5 0.6" stroke="#6a6a6a" stroke-width="0.8" fill="none"/></svg>
<div class="t" style="left:766.50px;top:473.60px;font-size:8.5px;color:#1a5fd0;transform:scaleX(0.8631);transform-origin:0 0;text-decoration:underline;-webkit-text-stroke:0.15px #1a5fd0;">NO_TAXAR</div>
<div class="a" style="left:848.2px;top:472.8px;width:24.5px;height:12.0px;background:#fff;border:1px solid #b0b0b0;"></div>
<div class="t" style="left:857.20px;top:473.60px;font-size:8.5px;color:#333;font-style:italic;transform:scaleX(0.8765);transform-origin:0 0;">0.00</div>
<div class="t" style="left:875.50px;top:473.10px;font-size:8.5px;color:#e2e2e2;transform:scaleX(0.7277);transform-origin:0 0;-webkit-text-stroke:0.2px #e2e2e2">%</div>
<div class="a" style="left:888.4px;top:471.6px;width:32.4px;height:14.2px;background:#5a5a5a;border:1px solid #8a8a8a"></div>
<svg class="a" style="left:891px;top:473.5px;" width="9" height="10" viewBox="0 0 9 10"><rect x="0.5" y="0.5" width="8" height="9" fill="#8a8a8a" stroke="#aaa" stroke-width="0.6"/><path d="M2 3H7M2 5H7M2 7H7" stroke="#ddd" stroke-width="0.7"/></svg>
<div class="t" style="left:902.00px;top:473.80px;font-size:8.5px;color:#e2e2e2;transform:scaleX(0.9489);transform-origin:0 0;;-webkit-text-stroke:0.15px #e2e2e2;">Get</div>
<svg class="a" style="left:924.3px;top:473.8px;" width="7.6" height="7.6" viewBox="0 0 7.6 7.6"><circle cx="3.8" cy="3.8" r="3.6" fill="#f2f2f2"/></svg>
<div class="t" style="left:937.50px;top:473.10px;font-size:8.5px;color:#e2e2e2;transform:scaleX(1.0065);transform-origin:0 0;-webkit-text-stroke:0.2px #e2e2e2">Auto</div>
<div class="a" style="left:517.0px;top:501.8px;width:451.30000000000007px;height:1px;background:#2b2b2b"></div>
<div class="a" style="left:517.0px;top:502.7px;width:451.30000000000007px;height:17.2px;background:#7a7a7a"></div>
<div class="t" style="left:521.60px;top:506.20px;font-size:8.5px;color:#30e030;font-style:italic;transform:scaleX(0.8941);transform-origin:0 0;-webkit-text-stroke:0.2px #30e030">Subtotal:</div>
<div class="a" style="left:563.6px;top:505.4px;width:61.10000000000002px;height:11.5px;background:#fff;border:1px solid #b0b0b0;"></div>
<div class="t" style="left:599.00px;top:506.70px;font-size:8.5px;color:#333;font-style:italic;transform:scaleX(0.9424);transform-origin:0 0;">373.00</div>
<div class="t" style="left:643.80px;top:506.20px;font-size:8.5px;color:#30e030;font-style:italic;transform:scaleX(0.9019);transform-origin:0 0;-webkit-text-stroke:0.2px #30e030">Tax 1:</div>
<div class="a" style="left:665.4px;top:505.4px;width:60.30000000000007px;height:11.5px;background:#fff;border:1px solid #b0b0b0;"></div>
<div class="t" style="left:710.00px;top:506.70px;font-size:8.5px;color:#333;font-style:italic;transform:scaleX(0.8765);transform-origin:0 0;">0.00</div>
<div class="t" style="left:733.00px;top:506.20px;font-size:8.5px;color:#30e030;font-style:italic;transform:scaleX(0.9019);transform-origin:0 0;-webkit-text-stroke:0.2px #30e030">Tax 2:</div>
<div class="a" style="left:765.9px;top:505.4px;width:61.30000000000007px;height:11.5px;background:#fff;border:1px solid #b0b0b0;"></div>
<div class="t" style="left:811.50px;top:506.70px;font-size:8.5px;color:#333;font-style:italic;transform:scaleX(0.8765);transform-origin:0 0;">0.00</div>
<div class="t" style="left:871.80px;top:506.20px;font-size:8.5px;color:#30e030;font-style:italic;transform:scaleX(0.9571);transform-origin:0 0;-webkit-text-stroke:0.2px #30e030">Total:</div>
<div class="a" style="left:893.3px;top:505.4px;width:67.70000000000005px;height:11.5px;background:#fff;border:1px solid #b0b0b0;"></div>
<div class="t" style="left:935.30px;top:506.70px;font-size:8.5px;color:#333;font-style:italic;transform:scaleX(0.9424);transform-origin:0 0;">373.00</div>
<div class="a" style="left:517.0px;top:519.9px;width:451.30000000000007px;height:16.3px;background:#8f8f8f"></div>
<div class="a" style="left:517.3px;top:520.2px;width:46.700000000000045px;height:15.8px;background:#555;border-right:1px solid #6a6a6a"></div>
<div class="a" style="left:565px;top:520.2px;width:40.60000000000002px;height:15.8px;background:#555;border-right:1px solid #6a6a6a"></div>
<div class="a" style="left:606.4px;top:520.2px;width:33.200000000000045px;height:15.8px;background:#555;border-right:1px solid #6a6a6a"></div>
<div class="a" style="left:640.4px;top:520.2px;width:48.60000000000002px;height:15.8px;background:#555;border-right:1px solid #6a6a6a"></div>
<div class="a" style="left:689.8px;top:520.2px;width:48.80000000000007px;height:15.8px;background:#555;border-right:1px solid #6a6a6a"></div>
<svg class="a" style="left:519.8px;top:522px;" width="11" height="11" viewBox="0 0 11 11"><rect x="0.5" y="0.5" width="10" height="10" fill="#8fd07a"/><rect x="2" y="2" width="7" height="7" fill="#f4fbf2"/><path d="M3 5.3L4.8 7L8 3.5" stroke="#4a9a3a" stroke-width="1.2" fill="none"/></svg>
<div class="t" style="left:532.40px;top:524.30px;font-size:8.5px;color:#e2e2e2;transform:scaleX(0.9802);transform-origin:0 0;;-webkit-text-stroke:0.15px #e2e2e2;">Unpost</div>
<svg class="a" style="left:567.5px;top:521.5px;" width="13" height="12" viewBox="0 0 13 12"><rect x="3" y="0.5" width="7" height="4" fill="#e8eef5"/><rect x="0.5" y="4" width="12" height="5" rx="1" fill="#a9b9cc"/><rect x="3" y="7.5" width="7" height="4" fill="#f4f7fa"/></svg>
<div class="t" style="left:583.50px;top:524.30px;font-size:8.5px;color:#e2e2e2;transform:scaleX(0.9440);transform-origin:0 0;;-webkit-text-stroke:0.15px #e2e2e2;">Print</div>
<svg class="a" style="left:607.5px;top:521.5px;" width="13" height="12" viewBox="0 0 13 12"><rect x="0.5" y="0.5" width="12" height="11" fill="#f2f2f2"/><rect x="0" y="3.5" width="12.5" height="6.5" fill="#d0142c"/><text x="6.3" y="8.6" font-size="4.6" font-family="Liberation Sans" font-weight="bold" fill="#fff" text-anchor="middle">PDF</text></svg>
<div class="t" style="left:621.80px;top:524.30px;font-size:8.5px;color:#e2e2e2;transform:scaleX(0.8059);transform-origin:0 0;;-webkit-text-stroke:0.15px #e2e2e2;">PDF</div>
<div class="a" style="left:626.5px;top:532.6px;width:5px;height:0.7px;background:#ddd"></div>
<svg class="a" style="left:642.2px;top:522px;" width="12" height="12" viewBox="0 0 12 12"><circle cx="6" cy="6" r="5.8" fill="#5aa6ea"/><path d="M3 5.2A3.2 3.2 0 0 1 8.6 4.2" stroke="#fff" stroke-width="1.2" fill="none"/><path d="M9.4 2.4L9.2 5.2L6.6 4.4Z" fill="#fff"/><path d="M9 6.8A3.2 3.2 0 0 1 3.4 7.8" stroke="#fff" stroke-width="1.2" fill="none"/><path d="M2.6 9.6L2.8 6.8L5.4 7.6Z" fill="#fff"/></svg>
<div class="t" style="left:656.40px;top:524.30px;font-size:8.5px;color:#e2e2e2;transform:scaleX(0.9195);transform-origin:0 0;;-webkit-text-stroke:0.15px #e2e2e2;">Preview</div>
<svg class="a" style="left:692px;top:521.5px;" width="11" height="13" viewBox="0 0 11 13"><rect x="0.5" y="0.5" width="10" height="12" fill="#1a6fd6"/><path d="M3.5 3.2H9M3.5 5.6H9M3.5 8H9M3.5 10.4H9" stroke="#fff" stroke-width="0.9"/><path d="M1.6 3.2H2.4M1.6 5.6H2.4M1.6 8H2.4M1.6 10.4H2.4" stroke="#fff" stroke-width="0.9"/></svg>
<div class="t" style="left:704.30px;top:524.30px;font-size:8.5px;color:#e2e2e2;transform:scaleX(0.8725);transform-origin:0 0;;-webkit-text-stroke:0.15px #e2e2e2;">Search</div>
<div class="a" style="left:708.8px;top:532.6px;width:4.2px;height:0.7px;background:#ddd"></div>
</body></html>
